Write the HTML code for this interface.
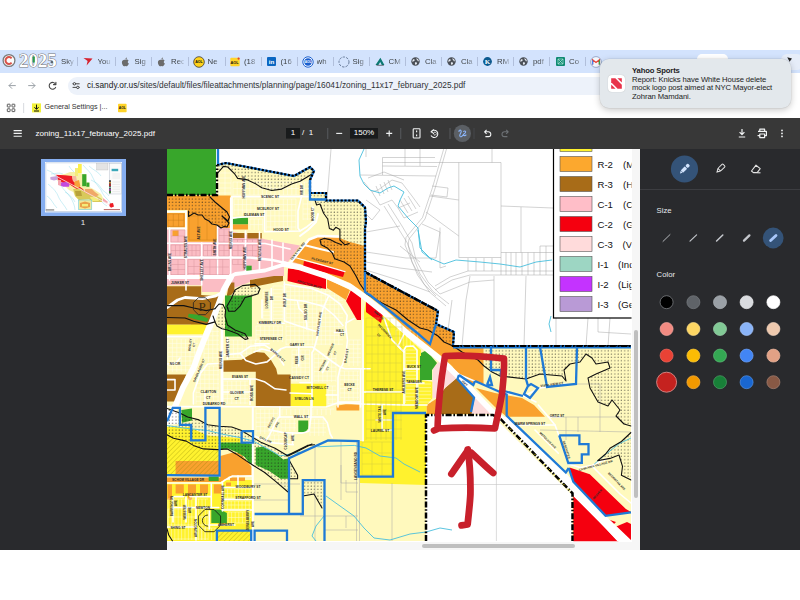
<!DOCTYPE html>
<html lang="en">
<head>
<meta charset="utf-8">
<title>zoning_11x17_february_2025.pdf</title>
<style>
html,body{margin:0;padding:0;background:#fff;}
body{width:800px;height:600px;position:relative;overflow:hidden;font-family:"Liberation Sans",sans-serif;}
.abs{position:absolute;}
#tabstrip{left:0;top:50px;width:800px;height:23px;background:#d3e3fd;}
#addr{left:0;top:73px;width:800px;height:25px;background:#fff;border-radius:6px 6px 0 0;}
#pill{left:68px;top:77px;width:700px;height:18px;background:#edf2fa;border-radius:9px;}
#bm{left:0;top:98px;width:800px;height:20px;background:#fff;}
#pdfbar{left:0;top:118px;width:800px;height:31px;background:#383838;}
#side{left:0;top:149px;width:167px;height:401px;background:#292a2d;}
#viewer{left:167px;top:149px;width:473px;height:401px;background:#fff;overflow:hidden;}
#panel{left:640px;top:149px;width:160px;height:401px;background:#292a2d;}
.tab{position:absolute;top:55px;height:13px;font-size:7.8px;line-height:13px;color:#3c4043;white-space:nowrap;overflow:hidden;-webkit-mask-image:linear-gradient(to right,#000 45%,rgba(0,0,0,0.15) 100%);mask-image:linear-gradient(to right,#000 45%,rgba(0,0,0,0.15) 100%);}
.sep{position:absolute;top:57px;width:1px;height:9px;background:#b1bfdb;}
.t{position:absolute;white-space:nowrap;}
</style>
</head>
<body>
<div class="abs" id="tabstrip"></div>
<div class="abs" id="addr"></div>
<div class="abs" id="pill"></div>
<div class="abs" id="bm"></div>
<div class="abs" id="pdfbar"></div>
<div class="abs" id="side"></div>
<div class="abs" id="viewer"></div>
<div class="abs" id="panel"></div>
<div class="sep" style="left:77px"></div>
<div class="sep" style="left:115px"></div>
<div class="sep" style="left:151px"></div>
<div class="sep" style="left:188px"></div>
<div class="sep" style="left:225px"></div>
<div class="sep" style="left:261px"></div>
<div class="sep" style="left:297px"></div>
<div class="sep" style="left:333px"></div>
<div class="sep" style="left:369px"></div>
<div class="sep" style="left:405px"></div>
<div class="sep" style="left:441px"></div>
<div class="sep" style="left:477px"></div>
<div class="sep" style="left:513px"></div>
<div class="sep" style="left:549px"></div>
<div class="sep" style="left:585px"></div>

<div class="tab" style="left:61px;width:13px">Sky</div>
<svg class="abs" style="left:83.1px;top:57px" width="10" height="9" viewBox="0 0 10 9"><path d="M0.5,1 L9.5,1.6 L3.6,8.6 L4.6,4 Z" fill="#d6232f"/></svg>
<div class="tab" style="left:97.5px;width:13px">You</div>
<svg class="abs" style="left:120.5px;top:56.5px" width="9" height="10" viewBox="0 0 9 10"><path d="M4.5,2.9 C5.4,2.3 6.8,2.3 7.6,3.4 C6.4,4.2 6.5,5.9 7.9,6.5 C7.4,7.9 6.5,9.2 5.7,9.2 C5.1,9.2 4.9,8.9 4.4,8.9 C3.9,8.9 3.6,9.2 3.1,9.2 C2.2,9.2 0.9,7.2 0.9,5.4 C0.9,3.4 2.6,2.4 4.5,2.9 Z M4.4,2.5 C4.3,1.5 5.1,0.6 6,0.5 C6.1,1.5 5.3,2.4 4.4,2.5 Z" fill="#6b6b6b"/></svg>
<div class="tab" style="left:134.5px;width:13px">Sig</div>
<svg class="abs" style="left:156.5px;top:56.5px" width="9" height="10" viewBox="0 0 9 10"><path d="M4.5,2.9 C5.4,2.3 6.8,2.3 7.6,3.4 C6.4,4.2 6.5,5.9 7.9,6.5 C7.4,7.9 6.5,9.2 5.7,9.2 C5.1,9.2 4.9,8.9 4.4,8.9 C3.9,8.9 3.6,9.2 3.1,9.2 C2.2,9.2 0.9,7.2 0.9,5.4 C0.9,3.4 2.6,2.4 4.5,2.9 Z M4.4,2.5 C4.3,1.5 5.1,0.6 6,0.5 C6.1,1.5 5.3,2.4 4.4,2.5 Z" fill="#6b6b6b"/></svg>
<div class="tab" style="left:171px;width:13px">Rec</div>
<svg class="abs" style="left:192.5px;top:55.5px" width="12" height="12" viewBox="0 0 12 12"><circle cx="6" cy="6" r="5.3" fill="#ffd21a" stroke="#3a3a3a" stroke-width="0.8"/><text x="6" y="7.4" font-size="3.6" font-weight="bold" text-anchor="middle" font-family="Liberation Sans, sans-serif" fill="#111">AOL</text></svg>
<div class="tab" style="left:207.5px;width:13px">Ne</div>
<svg class="abs" style="left:230px;top:56.5px" width="10" height="10" viewBox="0 0 10 10"><rect x="0.3" y="0.8" width="9.4" height="8.4" rx="1" fill="#ffd429"/><text x="4.6" y="6.6" font-size="3.8" font-weight="bold" text-anchor="middle" font-family="Liberation Sans, sans-serif" fill="#111">AOL</text><circle cx="8.6" cy="1.6" r="1.1" fill="#e0442e"/></svg>
<div class="tab" style="left:244px;width:13px">(18</div>
<svg class="abs" style="left:267px;top:57px" width="9" height="9" viewBox="0 0 9 9"><rect width="9" height="9" rx="1" fill="#0a66c2"/><text x="4.6" y="7.2" font-size="6.2" font-weight="bold" text-anchor="middle" font-family="Liberation Sans, sans-serif" fill="#fff">in</text></svg>
<div class="tab" style="left:280.5px;width:13px">(16</div>
<svg class="abs" style="left:301.5px;top:55.5px" width="12" height="12" viewBox="0 0 12 12"><circle cx="6" cy="6" r="5.2" fill="#fff" stroke="#1a5fd0" stroke-width="1"/><circle cx="6" cy="6" r="3.7" fill="#1a5fd0"/><text x="6" y="7.2" font-size="3.2" font-weight="bold" text-anchor="middle" font-family="Liberation Sans, sans-serif" fill="#fff">AOL</text></svg>
<div class="tab" style="left:316.5px;width:13px">wh</div>
<svg class="abs" style="left:337.5px;top:55.5px" width="12" height="12" viewBox="0 0 12 12"><circle cx="6" cy="6" r="5" fill="none" stroke="#5b6f8f" stroke-width="0.9" stroke-dasharray="2.4 1.2"/></svg>
<div class="tab" style="left:352.5px;width:13px">Sig</div>
<svg class="abs" style="left:374.5px;top:57px" width="10" height="9" viewBox="0 0 10 9"><path d="M0.5,8 L5.4,0.8 L9.4,8 L6.8,8 L5.2,5 L3.4,8 Z" fill="#0d7a74"/><path d="M1.5,8.3 L8.8,8.3" stroke="#222" stroke-width="0.6"/></svg>
<div class="tab" style="left:388.5px;width:13px">CM</div>
<svg class="abs" style="left:411px;top:57px" width="9" height="9" viewBox="0 0 9 9"><circle cx="4.5" cy="4.5" r="4.2" fill="#4a4f57"/><path d="M2,2.4 C3,2 4,2.6 3.6,3.6 C3.2,4.4 2.2,4.2 1.6,5 C1.2,4 1.4,3 2,2.4 Z M5.4,1.2 C6.8,1.6 7.8,2.8 7.9,4.2 C7,4.4 6.2,3.8 6.4,3 C5.6,2.8 5.2,2 5.4,1.2 Z M4,5.4 C5,5 6.2,5.6 6,6.6 C5.8,7.4 5,7.8 4.4,7.9 C4.4,7 3.6,6.4 4,5.4 Z" fill="#e8edf5"/></svg>
<div class="tab" style="left:425px;width:13px">Cla</div>
<svg class="abs" style="left:447px;top:57px" width="9" height="9" viewBox="0 0 9 9"><circle cx="4.5" cy="4.5" r="4.2" fill="#4a4f57"/><path d="M2,2.4 C3,2 4,2.6 3.6,3.6 C3.2,4.4 2.2,4.2 1.6,5 C1.2,4 1.4,3 2,2.4 Z M5.4,1.2 C6.8,1.6 7.8,2.8 7.9,4.2 C7,4.4 6.2,3.8 6.4,3 C5.6,2.8 5.2,2 5.4,1.2 Z M4,5.4 C5,5 6.2,5.6 6,6.6 C5.8,7.4 5,7.8 4.4,7.9 C4.4,7 3.6,6.4 4,5.4 Z" fill="#e8edf5"/></svg>
<div class="tab" style="left:461px;width:13px">Cla</div>
<svg class="abs" style="left:483px;top:57px" width="9" height="9" viewBox="0 0 9 9"><circle cx="4.5" cy="4.5" r="4.4" fill="#0b5a8f"/><text x="4.6" y="7" font-size="7" font-weight="bold" text-anchor="middle" font-family="Liberation Serif, serif" fill="#fff">K</text></svg>
<div class="tab" style="left:497px;width:13px">RM</div>
<svg class="abs" style="left:519px;top:57px" width="9" height="9" viewBox="0 0 9 9"><circle cx="4.5" cy="4.5" r="4.2" fill="#4a4f57"/><path d="M2,2.4 C3,2 4,2.6 3.6,3.6 C3.2,4.4 2.2,4.2 1.6,5 C1.2,4 1.4,3 2,2.4 Z M5.4,1.2 C6.8,1.6 7.8,2.8 7.9,4.2 C7,4.4 6.2,3.8 6.4,3 C5.6,2.8 5.2,2 5.4,1.2 Z M4,5.4 C5,5 6.2,5.6 6,6.6 C5.8,7.4 5,7.8 4.4,7.9 C4.4,7 3.6,6.4 4,5.4 Z" fill="#e8edf5"/></svg>
<div class="tab" style="left:533px;width:13px">pdf</div>
<svg class="abs" style="left:555.5px;top:57px" width="9" height="9" viewBox="0 0 9 9"><rect width="9" height="9" rx="1" fill="#0f8a72"/><path d="M2,2 L7,2 L7,7 L2,7 Z M2,2 L7,7 M7,2 L2,7" fill="none" stroke="#bfeee2" stroke-width="0.6"/></svg>
<div class="tab" style="left:569px;width:13px">Co</div>
<svg class="abs" style="left:590px;top:55.5px" width="12" height="12" viewBox="0 0 12 12"><circle cx="6" cy="6" r="5.4" fill="#f4f7fc" stroke="#7a8db5" stroke-width="0.7"/><path d="M2.6,8.6 L2.6,3.8 L6,6.4 L9.4,3.8 L9.4,8.6" fill="none" stroke="#ea4335" stroke-width="1.3"/><path d="M2.6,8.6 L2.6,4.4" stroke="#4285f4" stroke-width="1.3"/><path d="M9.4,8.6 L9.4,4.4" stroke="#34a853" stroke-width="1.3"/></svg>
<div class="abs" style="left:697px;top:54px;width:31px;height:19px;border-radius:5px 5px 0 0;background:#fff"></div>
<div class="abs" style="left:781px;top:54px;width:22px;height:16px;border-radius:6px;background:#e6edf9"></div>
<svg class="abs" style="left:0;top:50px" width="60" height="22" viewBox="0 50 60 22"><circle cx="9" cy="60.5" r="5.9" fill="#fbfbfb" stroke="#7a7a7a" stroke-width="1.3"/><path d="M11.6,58.4 A3.4,3.4 0 1 0 11.6,62.6" fill="none" stroke="#d9534a" stroke-width="2"/><text x="19" y="66.6" font-family="Liberation Serif, serif" font-size="18.6" font-weight="bold" fill="#fff" stroke="#777" stroke-width="1" paint-order="stroke" textLength="37.5" lengthAdjust="spacingAndGlyphs">2025</text><rect x="32.6" y="56.2" width="2.2" height="6.6" rx="1.1" fill="#2f9a4a"/><rect x="50.5" y="61" width="2.6" height="2.2" rx="1" fill="#59636e"/></svg>
<svg class="abs" style="left:0;top:73px" width="110" height="25" viewBox="0 73 110 25"><g fill="none" stroke="#9aa0a6" stroke-width="1" stroke-linecap="round" stroke-linejoin="round"><path d="M15.4,85.6 L9.2,85.6 M11.8,82.8 L9,85.6 L11.8,88.4"/><path d="M28.6,85.6 L34.8,85.6 M32.2,82.8 L35,85.6 L32.2,88.4"/></g><g fill="none" stroke="#474747" stroke-width="1.1" stroke-linecap="round"><path d="M55.6,84.2 A3.4,3.4 0 1 0 55.6,87.4"/><path d="M55.9,82.2 L55.9,84.6 L53.5,84.6" stroke-linejoin="round"/></g><g stroke="#333" stroke-width="0.9" fill="#edf2fa"><path d="M72.6,83.8 L79.6,83.8 M72.6,87.4 L79.6,87.4"/><circle cx="74.4" cy="83.8" r="1.2"/><circle cx="77.8" cy="87.4" r="1.2"/></g></svg>
<div class="t" id="url" style="left:87px;top:79.6px;font-size:8.34px;line-height:11px;color:#202124;">ci.sandy.or.us<span style="color:#303236">/sites/default/files/fileattachments/planning/page/16041/zoning_11x17_february_2025.pdf</span></div>
<svg class="abs" style="left:0;top:98px" width="140" height="20" viewBox="0 98 140 20"><g fill="none" stroke="#474747" stroke-width="0.9"><rect x="7.3" y="104.2" width="2.8" height="2.8" rx="0.4"/><rect x="12" y="104.2" width="2.8" height="2.8" rx="0.4"/><rect x="7.3" y="108.8" width="2.8" height="2.8" rx="0.4"/><rect x="12" y="108.8" width="2.8" height="2.8" rx="0.4"/></g><rect x="23.4" y="103" width="0.7" height="10" fill="#c7cbd1"/><rect x="32" y="103.4" width="9" height="9" fill="#f2f23a"/><path d="M36.5,104.6 L36.5,109 M34.4,107.2 L36.5,109.4 L38.6,107.2 M34,111 L39,111" fill="none" stroke="#111" stroke-width="1"/><rect x="118" y="103.8" width="8.6" height="8.4" rx="0.8" fill="#ffd429"/><text x="122.3" y="109.4" font-family="Liberation Sans, sans-serif" font-size="3.4" font-weight="bold" text-anchor="middle" fill="#111">AOL</text></svg>
<div class="t" style="left:44.4px;top:102.4px;font-size:7.15px;line-height:11px;color:#333;">General Settings |...</div>
<svg class="abs" style="left:0;top:118px" width="800" height="31" viewBox="0 118 800 31"><g stroke="#f1f3f4" stroke-width="1.1"><path d="M13.6,130.6 L21.8,130.6 M13.6,133.4 L21.8,133.4 M13.6,136.2 L21.8,136.2"/></g><rect x="286" y="128" width="14" height="10.6" fill="#191b1c"/><rect x="350" y="128" width="28" height="10.6" fill="#191b1c"/><rect x="327.4" y="128" width="0.8" height="11" fill="#5f6368"/><rect x="400.4" y="128" width="0.8" height="11" fill="#5f6368"/><rect x="449.6" y="128" width="0.8" height="11" fill="#5f6368"/><rect x="473.6" y="128" width="0.8" height="11" fill="#4a4d51"/><g stroke="#f1f3f4" stroke-width="1.1" fill="none"><path d="M336.2,133.4 L342.2,133.4"/><path d="M386.2,133.4 L392.2,133.4 M389.2,130.4 L389.2,136.4"/><rect x="413.2" y="128.8" width="6.8" height="9.2" rx="0.8"/><path d="M416.6,130.6 L416.6,132.2 M416.6,134.6 L416.6,136.2" stroke-width="1.2"/><path d="M431.4,131.6 A3.6,3.6 0 1 1 431,135.6"/><path d="M433.8,129.4 L431,131.8 L434,133.6" stroke-linejoin="round"/><path d="M433.2,133.6 L435,131.8 L436.8,133.6 L435,135.4 Z" stroke-width="0.8"/></g><circle cx="462.4" cy="133.4" r="8.6" fill="#5b5f64"/><path d="M459,131.4 C459,129.6 461.4,129.8 461.2,131.6 C461,133.6 458.8,135 460,136.4 C461,137.4 462.4,136 463,135 M463.6,131.4 C464.8,130.4 466.2,131.6 465.4,132.8 C464.6,134 463,133.6 463.6,135 C464,136 465.4,135.6 466,135" fill="none" stroke="#8ab4f8" stroke-width="1.1" stroke-linecap="round"/><g fill="none" stroke="#f1f3f4" stroke-width="1.1" stroke-linejoin="round"><path d="M486.6,129.8 L484.6,131.8 L486.6,133.8 M484.8,131.8 L488.4,131.8 A2.4,2.4 0 0 1 488.4,136.6 L485.4,136.6"/></g><g fill="none" stroke="#6d7175" stroke-width="1.1" stroke-linejoin="round"><path d="M506.2,129.8 L508.2,131.8 L506.2,133.8 M508,131.8 L504.4,131.8 A2.4,2.4 0 0 0 504.4,136.6 L507.4,136.6"/></g><g fill="none" stroke="#f1f3f4" stroke-width="1.2" stroke-linejoin="round"><path d="M742,129 L742,134.4 M739.6,132.2 L742,134.6 L744.4,132.2 M738.8,137 L745.2,137"/><path d="M759.8,131.2 L759.8,129.2 L764.6,129.2 L764.6,131.2 M758,131.4 L766.4,131.4 L766.4,135.6 L764.6,135.6 M759.8,135.6 L758,135.6 Z M759.8,134 L764.6,134 L764.6,137.6 L759.8,137.6 Z"/></g><g fill="#f1f3f4"><circle cx="782" cy="130.4" r="0.9"/><circle cx="782" cy="133.4" r="0.9"/><circle cx="782" cy="136.4" r="0.9"/></g></svg>
<div class="t" id="ttl" style="left:35.6px;top:128px;font-size:8.06px;line-height:11px;color:#fff;">zoning_11x17_february_2025.pdf</div>
<div class="t" style="left:286px;top:128px;width:14px;text-align:center;font-size:8px;line-height:10.6px;color:#fff;">1</div>
<div class="t" style="left:302px;top:128px;font-size:8px;line-height:10.6px;color:#fff;">/&nbsp; 1</div>
<div class="t" style="left:350px;top:128px;width:28px;text-align:center;font-size:8px;line-height:10.6px;color:#fff;">150%</div>
<div class="abs" style="left:41px;top:158.8px;width:84.6px;height:57px;background:#86aef0;"></div>
<svg class="abs" style="left:45px;top:162.2px" width="77.2" height="50.4" viewBox="0 0 77.2 50.4"><rect width="77.2" height="50.4" fill="#fff"/><rect x="0.9" y="0.9" width="75.4" height="48.6" fill="none" stroke="#9fb6d4" stroke-width="0.5"/><g fill="none" stroke="#6fd0e6" stroke-width="0.35"><path d="M2,8 C8,10 12,14 14,20 C16,26 22,30 26,36 C28,40 30,44 30,48 M3,22 C8,26 12,30 14,36 C16,40 20,44 22,48 M2,34 C6,36 8,42 12,46 M38,3 C42,8 46,10 48,16 C50,22 56,26 58,32 C60,36 64,38 66,42 M44,4 C48,8 54,10 56,14 M46,18 C50,20 54,22 56,26 C58,30 62,30 64,34 M20,30 C24,32 28,36 30,40 M6,12 C10,12 14,10 18,12 M52,36 C56,38 58,42 62,44 M24,4 C26,8 30,10 32,14"/></g><path d="M25,10 L30,10 L30,6 L33,6 L33,2 L36.6,2 L36.6,12 L41.4,12.2 L41.4,20.6 L44.4,20.6 L44.4,25 L50,28 L56,32 L58,36 L57,40 L50,40 L46,38 L33.6,38 L30,34 L28.2,30 L24,28 L20,24 L16,24 L14,20 L10,16 L14,13 L20,12 Z" fill="#f7f0a8"/><rect x="33" y="2" width="3.6" height="9" fill="#fff04a"/><rect x="30" y="6" width="3" height="8" fill="#f3ec7a"/><path d="M5.4,15 L12.6,14 L13,17.6 L9,18.6 L5.4,17.4 Z" fill="#c9a3dc"/><path d="M10.2,12.8 L20,13.2 L27,14 L28,19 L33,23.4 L38,27 L40,30 L38,31 L30,26 L24,22 L18,21 L13,17.6 L12.4,14 Z" fill="#ee1c25"/><path d="M15,20.6 L22,20 L24.6,22.6 L24,24.8 L18,24.8 L14.6,23 Z" fill="#c24be0"/><path d="M13,18 L16,18 L16,24 L13,23 Z" fill="#f4a6b0"/><rect x="37.2" y="12.2" width="4.2" height="12" fill="#38a62b"/><rect x="41.4" y="20.6" width="3" height="4.2" fill="#38a62b"/><path d="M29.4,19.4 L34,18 L35.4,24 L33,26.6 L29.4,25 Z" fill="#f7a23a"/><path d="M27,14 L31,14 L32,19 L28,19 Z" fill="#f5b8a0"/><path d="M28.2,27 L36,26.6 L40,30 L48,30 L52,34 L57,37 L57,40 L48,40 L44,37 L34,38 L30,34 Z" fill="#d8c95a"/><path d="M40,27 L47,27 L50,30 L54,33 L50,35 L44,33 L40,31 Z" fill="#f0a868"/><path d="M30,29 L36,29 L37,34 L31,34 Z" fill="#b8a23a"/><path d="M45,35 L52,35 L54,39 L47,39 Z" fill="#f3ec7a"/><path d="M12,14.6 L67.8,44.7" stroke="#fbe3e6" stroke-width="0.8"/><rect x="33.6" y="38" width="13.2" height="9.6" fill="#f2e79a" stroke="#56c6dc" stroke-width="0.5"/><path d="M35,41 L40,39.6 L45,41 L45,45 L40,46.4 L35,45 Z" fill="#e9a24a"/><path d="M37,42 L43,42 L43,44.4 L37,44.4 Z" fill="#f3ec7a"/><path d="M64.8,41.4 L68,41 L69,44.6 L66,45.8 L64.4,44 Z" fill="#ee1c25"/><path d="M58,36 L63,40 L62,41 L58,39 Z" fill="#f4a6b0"/><rect x="51.6" y="1.4" width="11.4" height="6.6" fill="#e4e4e4" stroke="#b0b0b0" stroke-width="0.3"/><rect x="64.2" y="1.4" width="12" height="30.6" fill="#fbfbfb" stroke="#a9b4c4" stroke-width="0.4"/><rect x="66.6" y="6.8" width="6.6" height="2.4" fill="#3aa7b8"/><rect x="64" y="18.2" width="2" height="13.2" fill="#4a4a4a"/><rect x="64.2" y="20" width="1.6" height="1.4" fill="#f7a23a"/><rect x="64.2" y="22.4" width="1.6" height="1.4" fill="#ee1c25"/><rect x="64.2" y="24.8" width="1.6" height="1.4" fill="#9dd6c3"/><rect x="64.2" y="27.2" width="1.6" height="1.4" fill="#c24be0"/><rect x="64.2" y="29.4" width="1.6" height="1.4" fill="#38a62b"/><g stroke="#c8c8c8" stroke-width="0.3"><path d="M67.4,12 L75,12 M67.4,14 L75,14 M67.4,16 L75,16 M67.4,20 L75,20 M67.4,22.4 L75,22.4 M67.4,24.8 L75,24.8 M67.4,27.2 L75,27.2 M67.4,29.6 L75,29.6"/></g><rect x="0.8" y="47.5" width="8.4" height="0.9" fill="#555"/><rect x="58.8" y="47.2" width="16.2" height="0.9" fill="#b05050"/></svg>
<div class="t" style="left:63px;top:217.4px;width:40px;text-align:center;font-size:8px;line-height:11px;color:#e8eaed;">1</div>
<div class="abs" style="left:631.5px;top:149px;width:8.5px;height:401px;background:#f6f6f6;"></div>
<div class="abs" style="left:167px;top:541.5px;width:465px;height:8.5px;background:#f6f6f6;"></div>
<div class="abs" style="left:633.6px;top:330px;width:4.2px;height:168px;border-radius:2.1px;background:#bfbfbf;"></div>
<div class="abs" style="left:422px;top:543.8px;width:153px;height:4.2px;border-radius:2.1px;background:#bfbfbf;"></div>
<svg class="abs" style="left:0;top:0" width="800" height="600" viewBox="0 0 800 600"><defs>
<clipPath id="mapclip"><rect x="167" y="149" width="464.5" height="392.5"/></clipPath>
<pattern id="dots" width="3.3" height="3.3" patternUnits="userSpaceOnUse"><circle cx="1" cy="1" r="0.5" fill="#1a1a1a"/></pattern>
<pattern id="hatch" width="3.4" height="3.4" patternUnits="userSpaceOnUse" patternTransform="rotate(-45)"><line x1="0" y1="0" x2="3.4" y2="0" stroke="#858000" stroke-width="0.5"/></pattern>
</defs><g clip-path="url(#mapclip)"><rect x="167" y="149" width="465" height="393" fill="#fff"/>
<polygon points="167,195 217,195 217,165 226,163 294,176 310,167 314,171 310,180 310,193 326,193 326,200.5 358,200.5 365,207.5 366,222 365,228 365,272 438,311 436,324 454,332 453,346 631,346 631,541 572,541 572,495 492,415 426,415 426,541 167,541" fill="#fff9bd" />
<g stroke="#ffffff" stroke-width="0.5" opacity="0.8">
<line x1="234" y1="199" x2="234" y2="215"/>
<line x1="238.2" y1="199" x2="238.2" y2="215"/>
<line x1="242.4" y1="199" x2="242.4" y2="215"/>
<line x1="246.6" y1="199" x2="246.6" y2="215"/>
<line x1="250.8" y1="199" x2="250.8" y2="215"/>
<line x1="255" y1="199" x2="255" y2="215"/>
<line x1="259.2" y1="199" x2="259.2" y2="215"/>
<line x1="234" y1="199" x2="263" y2="199"/>
<line x1="234" y1="204.5" x2="263" y2="204.5"/>
<line x1="234" y1="210" x2="263" y2="210"/>
</g>
<g stroke="#ffffff" stroke-width="0.5" opacity="0.8">
<line x1="266.5" y1="199" x2="266.5" y2="230"/>
<line x1="270.7" y1="199" x2="270.7" y2="230"/>
<line x1="274.9" y1="199" x2="274.9" y2="230"/>
<line x1="279.1" y1="199" x2="279.1" y2="230"/>
<line x1="283.3" y1="199" x2="283.3" y2="230"/>
<line x1="287.5" y1="199" x2="287.5" y2="230"/>
<line x1="291.7" y1="199" x2="291.7" y2="230"/>
<line x1="295.9" y1="199" x2="295.9" y2="230"/>
<line x1="266.5" y1="199" x2="296" y2="199"/>
<line x1="266.5" y1="204.6" x2="296" y2="204.6"/>
<line x1="266.5" y1="210.2" x2="296" y2="210.2"/>
<line x1="266.5" y1="215.8" x2="296" y2="215.8"/>
<line x1="266.5" y1="221.4" x2="296" y2="221.4"/>
<line x1="266.5" y1="227" x2="296" y2="227"/>
</g>
<g stroke="#ffffff" stroke-width="0.5" opacity="0.8">
<line x1="250" y1="219" x2="250" y2="230"/>
<line x1="254.2" y1="219" x2="254.2" y2="230"/>
<line x1="258.4" y1="219" x2="258.4" y2="230"/>
<line x1="262.6" y1="219" x2="262.6" y2="230"/>
<line x1="250" y1="219" x2="263" y2="219"/>
<line x1="250" y1="224.6" x2="263" y2="224.6"/>
</g>
<g stroke="#ffffff" stroke-width="0.5" opacity="0.8">
<line x1="219" y1="168" x2="219" y2="195"/>
<line x1="225" y1="168" x2="225" y2="195"/>
<line x1="231" y1="168" x2="231" y2="195"/>
<line x1="219" y1="168" x2="231" y2="168"/>
<line x1="219" y1="173" x2="231" y2="173"/>
<line x1="219" y1="178" x2="231" y2="178"/>
<line x1="219" y1="183" x2="231" y2="183"/>
<line x1="219" y1="188" x2="231" y2="188"/>
<line x1="219" y1="193" x2="231" y2="193"/>
</g>
<g stroke="#ffffff" stroke-width="0.5" opacity="0.8">
<line x1="233" y1="182" x2="233" y2="195"/>
<line x1="237.2" y1="182" x2="237.2" y2="195"/>
<line x1="241.4" y1="182" x2="241.4" y2="195"/>
<line x1="245.6" y1="182" x2="245.6" y2="195"/>
<line x1="249.8" y1="182" x2="249.8" y2="195"/>
<line x1="254" y1="182" x2="254" y2="195"/>
<line x1="258.2" y1="182" x2="258.2" y2="195"/>
<line x1="262.4" y1="182" x2="262.4" y2="195"/>
<line x1="266.6" y1="182" x2="266.6" y2="195"/>
<line x1="270.8" y1="182" x2="270.8" y2="195"/>
<line x1="275" y1="182" x2="275" y2="195"/>
<line x1="279.2" y1="182" x2="279.2" y2="195"/>
<line x1="283.4" y1="182" x2="283.4" y2="195"/>
<line x1="287.6" y1="182" x2="287.6" y2="195"/>
<line x1="291.8" y1="182" x2="291.8" y2="195"/>
<line x1="296" y1="182" x2="296" y2="195"/>
<line x1="300.2" y1="182" x2="300.2" y2="195"/>
<line x1="304.4" y1="182" x2="304.4" y2="195"/>
<line x1="308.6" y1="182" x2="308.6" y2="195"/>
<line x1="233" y1="182" x2="310" y2="182"/>
<line x1="233" y1="188.5" x2="310" y2="188.5"/>
<line x1="233" y1="195" x2="310" y2="195"/>
</g>
<g stroke="#ffffff" stroke-width="0.5" opacity="0.8">
<line x1="303" y1="199" x2="303" y2="220"/>
<line x1="307.5" y1="199" x2="307.5" y2="220"/>
<line x1="312" y1="199" x2="312" y2="220"/>
<line x1="303" y1="199" x2="312" y2="199"/>
<line x1="303" y1="204" x2="312" y2="204"/>
<line x1="303" y1="209" x2="312" y2="209"/>
<line x1="303" y1="214" x2="312" y2="214"/>
<line x1="303" y1="219" x2="312" y2="219"/>
</g>
<g stroke="#ffffff" stroke-width="0.5" opacity="0.8">
<line x1="273" y1="286" x2="273" y2="320"/>
<line x1="283" y1="286" x2="283" y2="320"/>
<line x1="273" y1="286" x2="283" y2="286"/>
<line x1="273" y1="289.6" x2="283" y2="289.6"/>
<line x1="273" y1="293.2" x2="283" y2="293.2"/>
<line x1="273" y1="296.8" x2="283" y2="296.8"/>
<line x1="273" y1="300.4" x2="283" y2="300.4"/>
<line x1="273" y1="304" x2="283" y2="304"/>
<line x1="273" y1="307.6" x2="283" y2="307.6"/>
<line x1="273" y1="311.2" x2="283" y2="311.2"/>
<line x1="273" y1="314.8" x2="283" y2="314.8"/>
<line x1="273" y1="318.4" x2="283" y2="318.4"/>
</g>
<g stroke="#ffffff" stroke-width="0.5" opacity="0.8">
<line x1="263" y1="290" x2="263" y2="320"/>
<line x1="270" y1="290" x2="270" y2="320"/>
<line x1="263" y1="290" x2="270" y2="290"/>
<line x1="263" y1="293.6" x2="270" y2="293.6"/>
<line x1="263" y1="297.2" x2="270" y2="297.2"/>
<line x1="263" y1="300.8" x2="270" y2="300.8"/>
<line x1="263" y1="304.4" x2="270" y2="304.4"/>
<line x1="263" y1="308" x2="270" y2="308"/>
<line x1="263" y1="311.6" x2="270" y2="311.6"/>
<line x1="263" y1="315.2" x2="270" y2="315.2"/>
<line x1="263" y1="318.8" x2="270" y2="318.8"/>
</g>
<g stroke="#ffffff" stroke-width="0.5" opacity="0.8">
<line x1="286" y1="287" x2="286" y2="345"/>
<line x1="290.4" y1="287" x2="290.4" y2="345"/>
<line x1="294.8" y1="287" x2="294.8" y2="345"/>
<line x1="299.2" y1="287" x2="299.2" y2="345"/>
<line x1="303.6" y1="287" x2="303.6" y2="345"/>
<line x1="308" y1="287" x2="308" y2="345"/>
<line x1="312.4" y1="287" x2="312.4" y2="345"/>
<line x1="316.8" y1="287" x2="316.8" y2="345"/>
<line x1="321.2" y1="287" x2="321.2" y2="345"/>
<line x1="325.6" y1="287" x2="325.6" y2="345"/>
<line x1="330" y1="287" x2="330" y2="345"/>
<line x1="334.4" y1="287" x2="334.4" y2="345"/>
<line x1="338.8" y1="287" x2="338.8" y2="345"/>
<line x1="286" y1="287" x2="343" y2="287"/>
<line x1="286" y1="291.4" x2="343" y2="291.4"/>
<line x1="286" y1="295.8" x2="343" y2="295.8"/>
<line x1="286" y1="300.2" x2="343" y2="300.2"/>
<line x1="286" y1="304.6" x2="343" y2="304.6"/>
<line x1="286" y1="309" x2="343" y2="309"/>
<line x1="286" y1="313.4" x2="343" y2="313.4"/>
<line x1="286" y1="317.8" x2="343" y2="317.8"/>
<line x1="286" y1="322.2" x2="343" y2="322.2"/>
<line x1="286" y1="326.6" x2="343" y2="326.6"/>
<line x1="286" y1="331" x2="343" y2="331"/>
<line x1="286" y1="335.4" x2="343" y2="335.4"/>
<line x1="286" y1="339.8" x2="343" y2="339.8"/>
<line x1="286" y1="344.2" x2="343" y2="344.2"/>
</g>
<g stroke="#ffffff" stroke-width="0.5" opacity="0.8">
<line x1="256" y1="326" x2="256" y2="342"/>
<line x1="260.4" y1="326" x2="260.4" y2="342"/>
<line x1="264.8" y1="326" x2="264.8" y2="342"/>
<line x1="269.2" y1="326" x2="269.2" y2="342"/>
<line x1="273.6" y1="326" x2="273.6" y2="342"/>
<line x1="278" y1="326" x2="278" y2="342"/>
<line x1="282.4" y1="326" x2="282.4" y2="342"/>
<line x1="256" y1="326" x2="283" y2="326"/>
<line x1="256" y1="330.4" x2="283" y2="330.4"/>
<line x1="256" y1="334.8" x2="283" y2="334.8"/>
<line x1="256" y1="339.2" x2="283" y2="339.2"/>
</g>
<g stroke="#ffffff" stroke-width="0.5" opacity="0.8">
<line x1="168" y1="339" x2="168" y2="372"/>
<line x1="172.4" y1="339" x2="172.4" y2="372"/>
<line x1="176.8" y1="339" x2="176.8" y2="372"/>
<line x1="181.2" y1="339" x2="181.2" y2="372"/>
<line x1="185.6" y1="339" x2="185.6" y2="372"/>
<line x1="190" y1="339" x2="190" y2="372"/>
<line x1="194.4" y1="339" x2="194.4" y2="372"/>
<line x1="168" y1="339" x2="198" y2="339"/>
<line x1="168" y1="343.4" x2="198" y2="343.4"/>
<line x1="168" y1="347.8" x2="198" y2="347.8"/>
<line x1="168" y1="352.2" x2="198" y2="352.2"/>
<line x1="168" y1="356.6" x2="198" y2="356.6"/>
<line x1="168" y1="361" x2="198" y2="361"/>
<line x1="168" y1="365.4" x2="198" y2="365.4"/>
<line x1="168" y1="369.8" x2="198" y2="369.8"/>
</g>
<g stroke="#ffffff" stroke-width="0.5" opacity="0.8">
<line x1="196" y1="366" x2="196" y2="404"/>
<line x1="200.4" y1="366" x2="200.4" y2="404"/>
<line x1="204.8" y1="366" x2="204.8" y2="404"/>
<line x1="209.2" y1="366" x2="209.2" y2="404"/>
<line x1="213.6" y1="366" x2="213.6" y2="404"/>
<line x1="218" y1="366" x2="218" y2="404"/>
<line x1="196" y1="366" x2="219" y2="366"/>
<line x1="196" y1="370.4" x2="219" y2="370.4"/>
<line x1="196" y1="374.8" x2="219" y2="374.8"/>
<line x1="196" y1="379.2" x2="219" y2="379.2"/>
<line x1="196" y1="383.6" x2="219" y2="383.6"/>
<line x1="196" y1="388" x2="219" y2="388"/>
<line x1="196" y1="392.4" x2="219" y2="392.4"/>
<line x1="196" y1="396.8" x2="219" y2="396.8"/>
<line x1="196" y1="401.2" x2="219" y2="401.2"/>
</g>
<g stroke="#ffffff" stroke-width="0.5" opacity="0.8">
<line x1="223" y1="381" x2="223" y2="404"/>
<line x1="227.4" y1="381" x2="227.4" y2="404"/>
<line x1="231.8" y1="381" x2="231.8" y2="404"/>
<line x1="236.2" y1="381" x2="236.2" y2="404"/>
<line x1="240.6" y1="381" x2="240.6" y2="404"/>
<line x1="245" y1="381" x2="245" y2="404"/>
<line x1="223" y1="381" x2="248" y2="381"/>
<line x1="223" y1="385.4" x2="248" y2="385.4"/>
<line x1="223" y1="389.8" x2="248" y2="389.8"/>
<line x1="223" y1="394.2" x2="248" y2="394.2"/>
<line x1="223" y1="398.6" x2="248" y2="398.6"/>
<line x1="223" y1="403" x2="248" y2="403"/>
</g>
<g stroke="#ffffff" stroke-width="0.5" opacity="0.8">
<line x1="204" y1="327" x2="204" y2="362"/>
<line x1="208.4" y1="327" x2="208.4" y2="362"/>
<line x1="212.8" y1="327" x2="212.8" y2="362"/>
<line x1="217.2" y1="327" x2="217.2" y2="362"/>
<line x1="204" y1="327" x2="219" y2="327"/>
<line x1="204" y1="331.4" x2="219" y2="331.4"/>
<line x1="204" y1="335.8" x2="219" y2="335.8"/>
<line x1="204" y1="340.2" x2="219" y2="340.2"/>
<line x1="204" y1="344.6" x2="219" y2="344.6"/>
<line x1="204" y1="349" x2="219" y2="349"/>
<line x1="204" y1="353.4" x2="219" y2="353.4"/>
<line x1="204" y1="357.8" x2="219" y2="357.8"/>
</g>
<g stroke="#ffffff" stroke-width="0.5" opacity="0.8">
<line x1="229" y1="340" x2="229" y2="358"/>
<line x1="233.4" y1="340" x2="233.4" y2="358"/>
<line x1="237.8" y1="340" x2="237.8" y2="358"/>
<line x1="242.2" y1="340" x2="242.2" y2="358"/>
<line x1="246.6" y1="340" x2="246.6" y2="358"/>
<line x1="251" y1="340" x2="251" y2="358"/>
<line x1="255.4" y1="340" x2="255.4" y2="358"/>
<line x1="259.8" y1="340" x2="259.8" y2="358"/>
<line x1="229" y1="340" x2="262" y2="340"/>
<line x1="229" y1="344.4" x2="262" y2="344.4"/>
<line x1="229" y1="348.8" x2="262" y2="348.8"/>
<line x1="229" y1="353.2" x2="262" y2="353.2"/>
<line x1="229" y1="357.6" x2="262" y2="357.6"/>
</g>
<g stroke="#ffffff" stroke-width="0.5" opacity="0.8">
<line x1="292" y1="350" x2="292" y2="381"/>
<line x1="296.4" y1="350" x2="296.4" y2="381"/>
<line x1="300.8" y1="350" x2="300.8" y2="381"/>
<line x1="305.2" y1="350" x2="305.2" y2="381"/>
<line x1="309.6" y1="350" x2="309.6" y2="381"/>
<line x1="292" y1="350" x2="310" y2="350"/>
<line x1="292" y1="354.4" x2="310" y2="354.4"/>
<line x1="292" y1="358.8" x2="310" y2="358.8"/>
<line x1="292" y1="363.2" x2="310" y2="363.2"/>
<line x1="292" y1="367.6" x2="310" y2="367.6"/>
<line x1="292" y1="372" x2="310" y2="372"/>
<line x1="292" y1="376.4" x2="310" y2="376.4"/>
<line x1="292" y1="380.8" x2="310" y2="380.8"/>
</g>
<g stroke="#ffffff" stroke-width="0.5" opacity="0.8">
<line x1="314" y1="354" x2="314" y2="382"/>
<line x1="318.4" y1="354" x2="318.4" y2="382"/>
<line x1="322.8" y1="354" x2="322.8" y2="382"/>
<line x1="327.2" y1="354" x2="327.2" y2="382"/>
<line x1="331.6" y1="354" x2="331.6" y2="382"/>
<line x1="336" y1="354" x2="336" y2="382"/>
<line x1="314" y1="354" x2="336" y2="354"/>
<line x1="314" y1="358.4" x2="336" y2="358.4"/>
<line x1="314" y1="362.8" x2="336" y2="362.8"/>
<line x1="314" y1="367.2" x2="336" y2="367.2"/>
<line x1="314" y1="371.6" x2="336" y2="371.6"/>
<line x1="314" y1="376" x2="336" y2="376"/>
<line x1="314" y1="380.4" x2="336" y2="380.4"/>
</g>
<g stroke="#ffffff" stroke-width="0.5" opacity="0.8">
<line x1="340" y1="371" x2="340" y2="400"/>
<line x1="344.4" y1="371" x2="344.4" y2="400"/>
<line x1="348.8" y1="371" x2="348.8" y2="400"/>
<line x1="353.2" y1="371" x2="353.2" y2="400"/>
<line x1="357.6" y1="371" x2="357.6" y2="400"/>
<line x1="340" y1="371" x2="359" y2="371"/>
<line x1="340" y1="375.4" x2="359" y2="375.4"/>
<line x1="340" y1="379.8" x2="359" y2="379.8"/>
<line x1="340" y1="384.2" x2="359" y2="384.2"/>
<line x1="340" y1="388.6" x2="359" y2="388.6"/>
<line x1="340" y1="393" x2="359" y2="393"/>
<line x1="340" y1="397.4" x2="359" y2="397.4"/>
</g>
<g stroke="#ffffff" stroke-width="0.5" opacity="0.8">
<line x1="349" y1="340" x2="349" y2="366"/>
<line x1="353.4" y1="340" x2="353.4" y2="366"/>
<line x1="357.8" y1="340" x2="357.8" y2="366"/>
<line x1="349" y1="340" x2="361" y2="340"/>
<line x1="349" y1="344.4" x2="361" y2="344.4"/>
<line x1="349" y1="348.8" x2="361" y2="348.8"/>
<line x1="349" y1="353.2" x2="361" y2="353.2"/>
<line x1="349" y1="357.6" x2="361" y2="357.6"/>
<line x1="349" y1="362" x2="361" y2="362"/>
</g>
<g stroke="#ffffff" stroke-width="0.5" opacity="0.8">
<line x1="328" y1="386" x2="328" y2="404"/>
<line x1="332.4" y1="386" x2="332.4" y2="404"/>
<line x1="328" y1="386" x2="336" y2="386"/>
<line x1="328" y1="390.4" x2="336" y2="390.4"/>
<line x1="328" y1="394.8" x2="336" y2="394.8"/>
<line x1="328" y1="399.2" x2="336" y2="399.2"/>
<line x1="328" y1="403.6" x2="336" y2="403.6"/>
</g>
<g stroke="#ffffff" stroke-width="0.5" opacity="0.8">
<line x1="256" y1="409" x2="256" y2="434"/>
<line x1="260.4" y1="409" x2="260.4" y2="434"/>
<line x1="264.8" y1="409" x2="264.8" y2="434"/>
<line x1="269.2" y1="409" x2="269.2" y2="434"/>
<line x1="273.6" y1="409" x2="273.6" y2="434"/>
<line x1="278" y1="409" x2="278" y2="434"/>
<line x1="256" y1="409" x2="278" y2="409"/>
<line x1="256" y1="413.4" x2="278" y2="413.4"/>
<line x1="256" y1="417.8" x2="278" y2="417.8"/>
<line x1="256" y1="422.2" x2="278" y2="422.2"/>
<line x1="256" y1="426.6" x2="278" y2="426.6"/>
<line x1="256" y1="431" x2="278" y2="431"/>
</g>
<g stroke="#ffffff" stroke-width="0.5" opacity="0.8">
<line x1="282" y1="409" x2="282" y2="415"/>
<line x1="286.4" y1="409" x2="286.4" y2="415"/>
<line x1="290.8" y1="409" x2="290.8" y2="415"/>
<line x1="295.2" y1="409" x2="295.2" y2="415"/>
<line x1="299.6" y1="409" x2="299.6" y2="415"/>
<line x1="304" y1="409" x2="304" y2="415"/>
<line x1="308.4" y1="409" x2="308.4" y2="415"/>
<line x1="312.8" y1="409" x2="312.8" y2="415"/>
<line x1="317.2" y1="409" x2="317.2" y2="415"/>
<line x1="321.6" y1="409" x2="321.6" y2="415"/>
<line x1="326" y1="409" x2="326" y2="415"/>
<line x1="330.4" y1="409" x2="330.4" y2="415"/>
<line x1="282" y1="409" x2="334" y2="409"/>
</g>
<g stroke="#ffffff" stroke-width="0.5" opacity="0.8">
<line x1="281" y1="419" x2="281" y2="431"/>
<line x1="285.4" y1="419" x2="285.4" y2="431"/>
<line x1="289.8" y1="419" x2="289.8" y2="431"/>
<line x1="294.2" y1="419" x2="294.2" y2="431"/>
<line x1="281" y1="419" x2="296" y2="419"/>
<line x1="281" y1="423.4" x2="296" y2="423.4"/>
<line x1="281" y1="427.8" x2="296" y2="427.8"/>
</g>
<g stroke="#ffffff" stroke-width="0.5" opacity="0.8">
<line x1="310" y1="419" x2="310" y2="436"/>
<line x1="314.4" y1="419" x2="314.4" y2="436"/>
<line x1="318.8" y1="419" x2="318.8" y2="436"/>
<line x1="323.2" y1="419" x2="323.2" y2="436"/>
<line x1="310" y1="419" x2="326" y2="419"/>
<line x1="310" y1="423.4" x2="326" y2="423.4"/>
<line x1="310" y1="427.8" x2="326" y2="427.8"/>
<line x1="310" y1="432.2" x2="326" y2="432.2"/>
</g>
<g stroke="#ffffff" stroke-width="0.5" opacity="0.8">
<line x1="270" y1="435" x2="270" y2="443"/>
<line x1="274.4" y1="435" x2="274.4" y2="443"/>
<line x1="278.8" y1="435" x2="278.8" y2="443"/>
<line x1="283.2" y1="435" x2="283.2" y2="443"/>
<line x1="287.6" y1="435" x2="287.6" y2="443"/>
<line x1="270" y1="435" x2="291" y2="435"/>
<line x1="270" y1="439.4" x2="291" y2="439.4"/>
</g>
<polygon points="167,149 216,149 216,195 167,195" fill="#38a62b" />
<polygon points="364,312 366,300 384,314 404,334 421,350 421,356 420,380 432.5,381.7 432.5,398 426.7,405 426.7,415 426,415 426,485 360,483 360,441 364,441" fill="#fff22e" />
<polygon points="290.6,383.75 326.25,383.75 326.25,407.5 290.6,407.5" fill="#fff22e" />
<polygon points="167,324.6 191,324.6 191,320 197,321 207,324 203,334.2 167,334.2" fill="#fff22e" />
<polygon points="167,480 253,480 253,541 167,541" fill="#fff22e" />
<polygon points="167,434.8 173.5,438.3 186.3,441.1 193.4,445.4 203.3,448.9 219,449.6 219,475.5 167,475.5" fill="#fff22e" />
<polygon points="167,427 189,427 207.6,435.5 240.2,438.3 240.2,442.6 218.9,442.6 218.9,449.6 203.3,448.9 193.4,445.4 186.3,441.1 173.5,438.3 167,434.8" fill="#fff22e" />
<polygon points="167,409 178,412.5 178,424 167,425" fill="#ffffff" />
<polygon points="167,229.5 187.5,229.5 187.5,241.7 217.5,241.7 217.5,224 221,228 227,227 230,224 230,231 266,239.4 300,245.6 288,262 284,266 284,276 252,279 250,282 234,288 222,292 202,292 202,285.2 167,285.2" fill="#fbbdc4" />
<polygon points="294,258.5 305,261 304.5,265 293,263" fill="#fbbdc4" />
<polygon points="167,195.5 230.5,195.5 230.5,228 222,228 217.5,226 217.5,241.7 187.5,241.7 187.5,210 167,210" fill="#f9a12e" />
<polygon points="167,213 185,213 185,227.4 167,227.4" fill="#f9a12e" />
<polygon points="172.5,230.5 178.5,230.5 178.5,236 172.5,236" fill="#f9a12e" />
<polygon points="293,262 310,239 318,236.5 338,237.5 350,242 365,246 365,272 438,311 436,324 454,332 453,346 483.5,346 483.5,384 475,381 473.3,385 459,375 452,366 440,355 408,330 384,308 366,294 350,283 326,273 300,264" fill="#f9a12e" />
<polygon points="327,279 350,290 346,300 327,288" fill="#f9a12e" />
<polygon points="476,388 495,393 508,395.5 522,398 534,405 545,416.7 506.7,416.7 496,408" fill="#f9a12e" />
<polygon points="426.7,414 426.7,405 437.5,398 437.5,414" fill="#f9a12e" />
<polygon points="336.5,405.7 345.8,404.3 359.3,404.5 359.3,410.6 336.5,410.6" fill="#f9a12e" />
<polygon points="220.3,456 233,452.5 240.2,453.2 251.5,466.7 251.5,475.2 228.8,476.6 224.6,481 220.3,481" fill="#f9a12e" />
<polygon points="175.6,461 219,461 219,475 175.6,475" fill="#f9a12e" />
<polygon points="167,477.5 221,477.5 221,482 167,482" fill="#f9a12e" />
<polygon points="167.5,484.4 172,484.4 172,500 167.5,500" fill="#f9a12e" />
<polygon points="175.6,484.4 183.8,484.4 183.8,493.5 175.6,493.5" fill="#f9a12e" />
<polygon points="188,484.4 196,484.4 196,493.5 188,493.5" fill="#f9a12e" />
<polygon points="200,484.4 208,484.4 208,493.5 200,493.5" fill="#f9a12e" />
<polygon points="213.8,484.4 221,484.4 221,493.5 213.8,493.5" fill="#f9a12e" />
<polygon points="188,493 192,493 192,500 188,500" fill="#f9a12e" />
<polygon points="230,477.5 245,477.5 245,481 230,481" fill="#f9a12e" />
<polygon points="226,482.5 231,482.5 231,486 226,486" fill="#f9a12e" />
<polygon points="232.7,224.2 248,224.2 248,229.5 232.7,229.5" fill="#f9a12e" />
<polygon points="167,286.2 201.2,286.2 201.2,295 215,296 222,292 218,303 212,318 208,324.4 167,324.4" fill="#a86c18" />
<polygon points="229.4,282.5 234.4,282.5 234.4,291.2 231.2,295 226.5,297" fill="#a86c18" />
<polygon points="250,280 274,276 283,276 283,281 275,282.5 250,287.5" fill="#a86c18" />
<polygon points="223.2,360.5 241.6,359.8 248.7,355.5 255.8,352 264.3,352.7 271,360 276.2,368.7 277.5,374.4 290.6,374.4 290.6,406.9 255.8,406.9 255.8,371.8 223.2,371.8" fill="#a86c18" />
<polygon points="167,374.6 186.3,374.6 181,388 175,401.6 167,401.6" fill="#a86c18" />
<polygon points="445,388 456.7,378 475,396.7 471.7,414 437.5,414 437.5,398" fill="#a86c18" />
<polygon points="232.7,233 244.6,233 244.6,238 232.7,238" fill="#a86c18" />
<polygon points="247.3,233 261.8,233 261.8,238.4 247.3,238.4" fill="#a86c18" />
<polygon points="433,368 441,360 456.7,378 445,388 437.5,398 432.5,398 432.5,380" fill="#fddcdc" />
<polygon points="475,396.7 491.7,414 471.7,414" fill="#fddcdc" />
<polygon points="304,261 345,271 343,277 303,267" fill="#f5000f" />
<polygon points="288,268.5 302,270 326,278.5 326,289 300,284 287.5,281" fill="#f5000f" />
<polygon points="351,290 361,296 361,320 357,320 346,301" fill="#f5000f" />
<polygon points="366,300 383,314 381,323 366,312" fill="#f5000f" />
<polygon points="573.3,495 619,541.5 573.3,541.5" fill="#f5000f" />
<polygon points="569.5,467.4 589.8,474.2 625.9,509 631,512 605.6,515.8 573.3,481.7" fill="#f5000f" />
<polygon points="607,519 616,522 611,527 604,522" fill="#f5000f" />
<polygon points="615,527 627,522 631,524 631,541 628,541" fill="#f5000f" />
<polygon points="225,295.6 251.9,295.6 251.9,336.5 225,336.5" fill="#38a62b" />
<polygon points="232.7,219 240,217.6 248,217.8 248,224.2 232.7,224.2" fill="#38a62b" />
<polygon points="246,265.7 251.7,265.7 251.7,271.7 246,271.7" fill="#38a62b" />
<polygon points="420,356 431,356 437,363 432,370 432,380 420,380" fill="#38a62b" />
<polygon points="421,353 425,351 431,356 421,356" fill="#38a62b" />
<polygon points="181.3,410 192,408.5 192,420.5 182,422.7" fill="#38a62b" />
<polygon points="220.3,442.6 240.2,442.6 253,444 253,463.8 250,463.8 244.4,456.7 237.3,452.5 227.4,448.2 220.3,449.6" fill="#38a62b" />
<polygon points="255.8,447.5 263.5,446.8 276.3,454 283.4,459.6 289,458.2 289,478.7 280.5,478.7 269.2,471 255.8,465" fill="#38a62b" />
<polygon points="298.3,420.6 308.2,420.6 308.2,428.4 305.4,432 298.3,432" fill="#38a62b" />
<polygon points="211.3,509.4 220,509.4 226.9,513 226.9,523 211.3,523" fill="#38a62b" />
<polygon points="208.7,476.5 218.7,476.5 218.7,481 208.7,481" fill="#38a62b" />
<polygon points="188.7,313.7 200,315 208.7,318.7 207,322 196,319.5 188,317" fill="#38a62b" />
<polygon points="167,434.8 173.5,438.3 186.3,441.1 193.4,445.4 203.3,448.9 219,449.6 219,475.5 167,475.5" fill="url(#hatch)" />
<polygon points="217,530.6 251,530.6 251,541 217,541" fill="url(#hatch)" />
<polygon points="217.8,172.8 217,166 226,163 294,176 310,167 314,171 312.9,173.5 307.2,177 300.1,181.3 291.6,184.1 281.7,189.1 271.7,190.5 261.8,187.7 256.1,184.1 247.6,179.9 237.7,178.4 234.9,174.2 227.8,167 223.5,166.4" fill="url(#dots)" />
<polygon points="311,193.5 326,193.5 326,199 311,199" fill="url(#dots)" />
<polygon points="314.8,200 358,200.5 365,207.5 366,222 365,228 365,246 349.8,243 345,244.8 339.9,240 339.9,229.6 335.8,227.3 333.5,230.2 329.4,228.5 327.7,219 323.6,213.3 320,204 316.6,205" fill="url(#dots)" />
<polygon points="167,196.5 210,196.5 215,202 221,207 227,212 229.5,217 229,223 227,227 221,228 217,225 212,224 209,221 205,219 202,215 198,215 194,213 191,215 188.5,216.5 188.5,210.5 167,210.5" fill="url(#dots)" />
<polygon points="320,240 324,238.4 330,239.6 335.8,242.5 341.6,244.8 349.8,243 365,246 365,272 438,311 436,324 444,342 438,336 428,330 420,328 408,320 396,310 380,302 367,294 360,284 356,276 350,266 344,262 334.7,258.8 332.3,253 327.7,248.3 321.2,244.8" fill="url(#dots)" />
<polygon points="436,324 454,332 453,346 444,342" fill="url(#dots)" />
<polygon points="484,347 631,347 631,426 624,424 616,416 620,410 612,400 608,406 598,402 590,388 588,378 596,374 610,368 608,362 596,364 592,358 586,354 580,362 570,364 564,370 566,381 562,376 540,374 526,379 500,376 492,372 484,366" fill="url(#dots)" />
<polygon points="167,408.5 179.2,412.8 187.7,417 199,419.9 207.6,424.8 218.9,426.2 231.7,427 241.6,430.5 253,437.6 261.5,442.6 275,448.2 288,456 288,492 275,480.9 264.3,472.3 253,465.2 244.4,459.6 236,453.9 227.4,448.9 217.5,449.6 203.3,448.9 193.4,445.4 186.3,441.1 173.5,438.3 167,434.8" fill="url(#dots)" />
<polygon points="303,480 324,480 324,508 322,508 314,494 303,496" fill="url(#dots)" />
<polygon points="289,462.4 297.6,475.2 297.6,478.7 289,478.7" fill="url(#dots)" />
<polygon points="631,432.5 621.4,441.5 610,448.3 605.6,454 597.7,460.7 610,458.4 619,455 622.5,466.3 621.4,475.3 631,480" fill="url(#dots)" />
<polygon points="235,290 242.5,285.6 255,284.4 260,288.7 258,293.7 252.5,295.6 245,297.5 240,306.2 235,311.2 228.7,311.2 226.9,306.2 231.2,298.7" fill="url(#dots)" />
<polygon points="215,308 219,304 223,304.5 225.6,310 225,316.2 227.5,325 235,330 245,333.7 248,338.7 245,339.4 237.5,333.7 227.5,330 222,328.7 217,326 215,320" fill="url(#dots)" />
<polyline points="232,196.6 311.5,196.6" fill="none" stroke="#ffffff" stroke-width="1.6" stroke-linecap="round" stroke-linejoin="round"/>
<polyline points="232,196.6 232,245" fill="none" stroke="#ffffff" stroke-width="1.6" stroke-linecap="round" stroke-linejoin="round"/>
<polyline points="243.4,180 243.4,196.6" fill="none" stroke="#ffffff" stroke-width="1.6" stroke-linecap="round" stroke-linejoin="round"/>
<polyline points="232,218 250,216.5 264.6,216" fill="none" stroke="#ffffff" stroke-width="1.6" stroke-linecap="round" stroke-linejoin="round"/>
<polyline points="264.6,196.6 264.6,231.6" fill="none" stroke="#ffffff" stroke-width="1.6" stroke-linecap="round" stroke-linejoin="round"/>
<polyline points="264.6,231.6 300,231 307,226.7 314.3,221 313,207" fill="none" stroke="#ffffff" stroke-width="1.6" stroke-linecap="round" stroke-linejoin="round"/>
<polyline points="301.5,184 301.5,196.6 298,211 298,228 300,231" fill="none" stroke="#ffffff" stroke-width="1.6" stroke-linecap="round" stroke-linejoin="round"/>
<polyline points="167,243.2 265,243.5 290,249" fill="none" stroke="#ffffff" stroke-width="1.6" stroke-linecap="round" stroke-linejoin="round"/>
<polyline points="169.5,228 169.5,280" fill="none" stroke="#ffffff" stroke-width="1.6" stroke-linecap="round" stroke-linejoin="round"/>
<polyline points="186,211 186,290" fill="none" stroke="#ffffff" stroke-width="1.6" stroke-linecap="round" stroke-linejoin="round"/>
<polyline points="201.7,243 201.7,285" fill="none" stroke="#ffffff" stroke-width="1.6" stroke-linecap="round" stroke-linejoin="round"/>
<polyline points="217.5,226 217.5,277" fill="none" stroke="#ffffff" stroke-width="1.6" stroke-linecap="round" stroke-linejoin="round"/>
<polyline points="230.7,198 230.7,277" fill="none" stroke="#ffffff" stroke-width="1.6" stroke-linecap="round" stroke-linejoin="round"/>
<polyline points="245.5,231 245.5,272" fill="none" stroke="#ffffff" stroke-width="1.6" stroke-linecap="round" stroke-linejoin="round"/>
<polyline points="259.5,232 259.5,271" fill="none" stroke="#ffffff" stroke-width="1.6" stroke-linecap="round" stroke-linejoin="round"/>
<polyline points="272,240 272,268" fill="none" stroke="#ffffff" stroke-width="1.6" stroke-linecap="round" stroke-linejoin="round"/>
<polyline points="283,243 283,266" fill="none" stroke="#ffffff" stroke-width="1.6" stroke-linecap="round" stroke-linejoin="round"/>
<polyline points="167,211.7 186,211.7" fill="none" stroke="#ffffff" stroke-width="1.6" stroke-linecap="round" stroke-linejoin="round"/>
<polyline points="167,228.4 186,228.4" fill="none" stroke="#ffffff" stroke-width="1.6" stroke-linecap="round" stroke-linejoin="round"/>
<polyline points="284.4,282 284.4,321 297.5,325.4 314.6,331 317.4,331.5" fill="none" stroke="#ffffff" stroke-width="1.6" stroke-linecap="round" stroke-linejoin="round"/>
<polyline points="271.3,288.5 271.3,321" fill="none" stroke="#ffffff" stroke-width="1.6" stroke-linecap="round" stroke-linejoin="round"/>
<polyline points="258,323.3 284.4,323.3" fill="none" stroke="#ffffff" stroke-width="1.6" stroke-linecap="round" stroke-linejoin="round"/>
<polyline points="262,300 262,318" fill="none" stroke="#ffffff" stroke-width="1.6" stroke-linecap="round" stroke-linejoin="round"/>
<polyline points="284.4,284.3 311.7,288.5 328.8,295.6 340,304 347.2,315.5 345.8,326.8 347.5,340 346.2,352.5 342.5,365 340,368.75 338,377.5 338,407" fill="none" stroke="#ffffff" stroke-width="1.6" stroke-linecap="round" stroke-linejoin="round"/>
<polyline points="284.4,299 304.6,301.3 323,306.2 334.4,315.5 343,325.4" fill="none" stroke="#ffffff" stroke-width="1.6" stroke-linecap="round" stroke-linejoin="round"/>
<polyline points="297.5,301.3 299,308.4 304.6,314 306.8,324 306.8,329" fill="none" stroke="#ffffff" stroke-width="1.6" stroke-linecap="round" stroke-linejoin="round"/>
<polyline points="328.8,295.6 323,308.4 320.2,322.6 317.4,336.7 313.75,350 312,352.5 312,407.5" fill="none" stroke="#ffffff" stroke-width="1.6" stroke-linecap="round" stroke-linejoin="round"/>
<polyline points="254,352 262,349 276.25,352.5 281,348.75 286,347 312.5,347 320,352.5 330,360 340,367 345,368.75 370,368.75" fill="none" stroke="#ffffff" stroke-width="1.6" stroke-linecap="round" stroke-linejoin="round"/>
<polyline points="255,343.8 269.2,343.8" fill="none" stroke="#ffffff" stroke-width="1.6" stroke-linecap="round" stroke-linejoin="round"/>
<polyline points="276.25,352.5 283.75,365" fill="none" stroke="#ffffff" stroke-width="1.6" stroke-linecap="round" stroke-linejoin="round"/>
<polyline points="334.4,332.5 346,332" fill="none" stroke="#ffffff" stroke-width="1.6" stroke-linecap="round" stroke-linejoin="round"/>
<polyline points="328.75,361.25 322.5,372.5" fill="none" stroke="#ffffff" stroke-width="1.6" stroke-linecap="round" stroke-linejoin="round"/>
<polyline points="345.8,323 354,318.6" fill="none" stroke="#ffffff" stroke-width="1.6" stroke-linecap="round" stroke-linejoin="round"/>
<polyline points="298.75,347 298.75,366" fill="none" stroke="#ffffff" stroke-width="1.6" stroke-linecap="round" stroke-linejoin="round"/>
<polyline points="300,382.5 312,382.5" fill="none" stroke="#ffffff" stroke-width="1.6" stroke-linecap="round" stroke-linejoin="round"/>
<polyline points="290,393 311.25,393.75" fill="none" stroke="#ffffff" stroke-width="1.6" stroke-linecap="round" stroke-linejoin="round"/>
<polyline points="338,402 360,402" fill="none" stroke="#ffffff" stroke-width="1.6" stroke-linecap="round" stroke-linejoin="round"/>
<polyline points="360.6,369 360.6,407" fill="none" stroke="#ffffff" stroke-width="1.6" stroke-linecap="round" stroke-linejoin="round"/>
<polyline points="326.25,395 338,395" fill="none" stroke="#ffffff" stroke-width="1.6" stroke-linecap="round" stroke-linejoin="round"/>
<polyline points="227.4,337.8 227.4,359" fill="none" stroke="#ffffff" stroke-width="1.6" stroke-linecap="round" stroke-linejoin="round"/>
<polyline points="222,363.3 207.6,364 200.5,373.2 193.4,393 193.4,404" fill="none" stroke="#ffffff" stroke-width="1.6" stroke-linecap="round" stroke-linejoin="round"/>
<polyline points="222,379 255.8,379 264.3,381.7 275,388.8 286,390" fill="none" stroke="#ffffff" stroke-width="1.6" stroke-linecap="round" stroke-linejoin="round"/>
<polyline points="250,379 250,404.4" fill="none" stroke="#ffffff" stroke-width="1.6" stroke-linecap="round" stroke-linejoin="round"/>
<polyline points="224.6,354.8 240.2,353.4 245.9,360.5 255.8,364 267.1,361.9 275,354.8 280,350" fill="none" stroke="#ffffff" stroke-width="1.6" stroke-linecap="round" stroke-linejoin="round"/>
<polyline points="240.2,353.4 250.1,346.3 264.3,344.9 275,352" fill="none" stroke="#ffffff" stroke-width="1.6" stroke-linecap="round" stroke-linejoin="round"/>
<polyline points="167,336.6 203,336.6" fill="none" stroke="#ffffff" stroke-width="1.6" stroke-linecap="round" stroke-linejoin="round"/>
<polyline points="167,364 176,363 180,358" fill="none" stroke="#ffffff" stroke-width="1.6" stroke-linecap="round" stroke-linejoin="round"/>
<polyline points="222,392 250,392" fill="none" stroke="#ffffff" stroke-width="1.6" stroke-linecap="round" stroke-linejoin="round"/>
<polyline points="205,392 205,404" fill="none" stroke="#ffffff" stroke-width="1.6" stroke-linecap="round" stroke-linejoin="round"/>
<polyline points="167,379.6 175,379.6 175,390 167,390" fill="none" stroke="#ffffff" stroke-width="1.6" stroke-linecap="round" stroke-linejoin="round"/>
<polyline points="167,406.6 326,407 335.9,403.4 345,402.6 362,404 404,405 427,405" fill="none" stroke="#ffffff" stroke-width="1.6" stroke-linecap="round" stroke-linejoin="round"/>
<polyline points="279.8,407 279.8,417" fill="none" stroke="#ffffff" stroke-width="1.6" stroke-linecap="round" stroke-linejoin="round"/>
<polyline points="311,400 311,417" fill="none" stroke="#ffffff" stroke-width="1.6" stroke-linecap="round" stroke-linejoin="round"/>
<polyline points="279,417 323,417 327.3,422.7 330.2,434 332.3,437.6" fill="none" stroke="#ffffff" stroke-width="1.6" stroke-linecap="round" stroke-linejoin="round"/>
<polyline points="279.8,417 277.7,418.4 269.2,435.5 266.3,439.7" fill="none" stroke="#ffffff" stroke-width="1.6" stroke-linecap="round" stroke-linejoin="round"/>
<polyline points="269.2,429.8 283.4,432.6 301.8,433.3 308.9,431.2 311,417" fill="none" stroke="#ffffff" stroke-width="1.6" stroke-linecap="round" stroke-linejoin="round"/>
<polyline points="292.6,433 292.6,444" fill="none" stroke="#ffffff" stroke-width="1.6" stroke-linecap="round" stroke-linejoin="round"/>
<polyline points="255,436.2 270.6,442.6 293.3,444.7" fill="none" stroke="#ffffff" stroke-width="1.6" stroke-linecap="round" stroke-linejoin="round"/>
<polyline points="363,320 363,441" fill="none" stroke="#ffffff" stroke-width="1.6" stroke-linecap="round" stroke-linejoin="round"/>
<polyline points="363,392 404,392" fill="none" stroke="#ffffff" stroke-width="1.6" stroke-linecap="round" stroke-linejoin="round"/>
<polyline points="404,404 404,350 406,346.5 413,346 417,350 417,404" fill="none" stroke="#ffffff" stroke-width="1.6" stroke-linecap="round" stroke-linejoin="round"/>
<polyline points="404,369 419,369" fill="none" stroke="#ffffff" stroke-width="1.6" stroke-linecap="round" stroke-linejoin="round"/>
<polyline points="404,383 424,383" fill="none" stroke="#ffffff" stroke-width="1.6" stroke-linecap="round" stroke-linejoin="round"/>
<polyline points="382,405 382,430 392,430" fill="none" stroke="#ffffff" stroke-width="1.6" stroke-linecap="round" stroke-linejoin="round"/>
<polyline points="376,420 392,420" fill="none" stroke="#ffffff" stroke-width="1.6" stroke-linecap="round" stroke-linejoin="round"/>
<polyline points="384,318 392,340 404,352" fill="none" stroke="#ffffff" stroke-width="1.6" stroke-linecap="round" stroke-linejoin="round"/>
<polyline points="404,334 398,346 404,352" fill="none" stroke="#ffffff" stroke-width="1.6" stroke-linecap="round" stroke-linejoin="round"/>
<polyline points="167,483 221,483 225,480 232.5,476 252.5,476" fill="none" stroke="#ffffff" stroke-width="1.6" stroke-linecap="round" stroke-linejoin="round"/>
<polyline points="222.5,483 222.5,511" fill="none" stroke="#ffffff" stroke-width="1.6" stroke-linecap="round" stroke-linejoin="round"/>
<polyline points="211.3,483.8 211.3,507.5" fill="none" stroke="#ffffff" stroke-width="1.6" stroke-linecap="round" stroke-linejoin="round"/>
<polyline points="209.4,511 209.4,529" fill="none" stroke="#ffffff" stroke-width="1.6" stroke-linecap="round" stroke-linejoin="round"/>
<polyline points="172.5,507.5 218.8,507.5" fill="none" stroke="#ffffff" stroke-width="1.6" stroke-linecap="round" stroke-linejoin="round"/>
<polyline points="173,497 173,522" fill="none" stroke="#ffffff" stroke-width="1.6" stroke-linecap="round" stroke-linejoin="round"/>
<polyline points="186,497 186,522" fill="none" stroke="#ffffff" stroke-width="1.6" stroke-linecap="round" stroke-linejoin="round"/>
<polyline points="196,497 196,540" fill="none" stroke="#ffffff" stroke-width="1.6" stroke-linecap="round" stroke-linejoin="round"/>
<polyline points="167,527 195,527" fill="none" stroke="#ffffff" stroke-width="1.6" stroke-linecap="round" stroke-linejoin="round"/>
<polyline points="209,525 235,525" fill="none" stroke="#ffffff" stroke-width="1.6" stroke-linecap="round" stroke-linejoin="round"/>
<polyline points="174.4,496.6 183.8,496.6" fill="none" stroke="#ffffff" stroke-width="1.6" stroke-linecap="round" stroke-linejoin="round"/>
<polyline points="190,496.6 211,496.6" fill="none" stroke="#ffffff" stroke-width="1.6" stroke-linecap="round" stroke-linejoin="round"/>
<polyline points="222.5,487.5 253,487.5" fill="none" stroke="#ffffff" stroke-width="1.6" stroke-linecap="round" stroke-linejoin="round"/>
<polyline points="222.5,499.4 253,499.4" fill="none" stroke="#ffffff" stroke-width="1.6" stroke-linecap="round" stroke-linejoin="round"/>
<polyline points="222.5,510 253,510" fill="none" stroke="#ffffff" stroke-width="1.6" stroke-linecap="round" stroke-linejoin="round"/>
<polyline points="238,476 238,487" fill="none" stroke="#ffffff" stroke-width="1.6" stroke-linecap="round" stroke-linejoin="round"/>
<polyline points="458,374 500,392 524,396 536,402" fill="none" stroke="#ffffff" stroke-width="1.6" stroke-linecap="round" stroke-linejoin="round"/>
<polyline points="524,396 540,388 566,384" fill="none" stroke="#ffffff" stroke-width="1.6" stroke-linecap="round" stroke-linejoin="round"/>
<polyline points="538.3,405 548.3,416.7 555,425 560,438.3 568.3,463.3" fill="none" stroke="#ffffff" stroke-width="1.6" stroke-linecap="round" stroke-linejoin="round"/>
<polyline points="548,416.7 562,417" fill="none" stroke="#ffffff" stroke-width="1.6" stroke-linecap="round" stroke-linejoin="round"/>
<polyline points="510,425 555,425" fill="none" stroke="#ffffff" stroke-width="1.6" stroke-linecap="round" stroke-linejoin="round"/>
<polyline points="535,430 558.3,453.3" fill="none" stroke="#ffffff" stroke-width="1.6" stroke-linecap="round" stroke-linejoin="round"/>
<polyline points="568.3,464 580,467.5 592,465.5 606,459" fill="none" stroke="#ffffff" stroke-width="1.6" stroke-linecap="round" stroke-linejoin="round"/>
<polyline points="592,466 606,480 620,494 631,503" fill="none" stroke="#ffffff" stroke-width="1.6" stroke-linecap="round" stroke-linejoin="round"/>
<polyline points="252.8,407 252.8,541" fill="none" stroke="#ffffff" stroke-width="2" stroke-linecap="round" stroke-linejoin="round"/>
<polyline points="231,277 223.75,290 218.75,303.75 210.5,325 204,340 198.2,355 193.5,368 183,387.4 176,404.4 174,409" fill="none" stroke="#ffffff" stroke-width="6" stroke-linecap="round" stroke-linejoin="round"/>
<polyline points="222,329 222,404.4" fill="none" stroke="#ffffff" stroke-width="2.8" stroke-linecap="round" stroke-linejoin="round"/>
<polyline points="167,307.5 177.5,300 185,297.5 202.5,298.7 215,296.2 220,293.7" fill="none" stroke="#ffffff" stroke-width="2.8" stroke-linecap="round" stroke-linejoin="round"/>
<polyline points="284,264 300,267.5 326,276 350,286.5 365,297.5 382,311 408,334 424,346.5 440,359 458.3,376.5 475,393.8 491.7,411 504,420 559,475 574,490 621,541 640,562" fill="none" stroke="#ffffff" stroke-width="5.6" stroke-linecap="round" stroke-linejoin="round"/>
<polygon points="506.7,415.8 565.8,472.5 573.3,481.7 605.6,515.8 633,542 619,542 574,496.7 572.5,493.3 500.8,419.2" fill="#ffffff" />
<polyline points="167,257.5 250,257.5 272,260 290,264" fill="none" stroke="#ffffff" stroke-width="2.6" stroke-linecap="round" stroke-linejoin="round"/>
<polyline points="167,277 229.5,277 235.5,274 265,270.5 284,264.5" fill="none" stroke="#ffffff" stroke-width="3.8" stroke-linecap="round" stroke-linejoin="round"/>
<polyline points="290,263 309,239.5 318,236 338,236.5" fill="none" stroke="#ffffff" stroke-width="2.6" stroke-linecap="round" stroke-linejoin="round"/>
<polyline points="300,236 308,230 316,222 318,214" fill="none" stroke="#ffffff" stroke-width="2" stroke-linecap="round" stroke-linejoin="round"/>
<polyline points="304,245 320,249 333,252" fill="none" stroke="#ffffff" stroke-width="2" stroke-linecap="round" stroke-linejoin="round"/>
<polyline points="293,257 320,264.4 345,271.6" fill="none" stroke="#ffffff" stroke-width="1.2" stroke-linecap="round" stroke-linejoin="round"/>
<polyline points="331,149 327,200" fill="none" stroke="#a6a6a6" stroke-width="0.5" />
<polyline points="443.7,149 432.5,187.5 422.5,217.5 406,237.5 405,245 417.5,275 430,292.5 446,306" fill="none" stroke="#a6a6a6" stroke-width="0.5" />
<polyline points="446.5,149 435.2,188 425,219 409,239 408,245 420,274 432.5,291 449,304" fill="none" stroke="#a6a6a6" stroke-width="0.5" />
<polyline points="382.5,157.5 435,157.5" fill="none" stroke="#a6a6a6" stroke-width="0.5" />
<polyline points="382.5,162.5 501,162.5" fill="none" stroke="#a6a6a6" stroke-width="0.5" />
<polyline points="382.5,166 437,166.5" fill="none" stroke="#a6a6a6" stroke-width="0.5" />
<polyline points="360,175 436,176" fill="none" stroke="#a6a6a6" stroke-width="0.5" />
<polyline points="382.5,157.5 382.5,175" fill="none" stroke="#a6a6a6" stroke-width="0.5" />
<polyline points="405,149 405,166" fill="none" stroke="#a6a6a6" stroke-width="0.5" />
<polyline points="420,149 420,166" fill="none" stroke="#a6a6a6" stroke-width="0.5" />
<polyline points="366,149 366,157" fill="none" stroke="#a6a6a6" stroke-width="0.5" />
<polyline points="458.8,162.5 458.8,257.5" fill="none" stroke="#a6a6a6" stroke-width="0.5" />
<polyline points="501,162.5 501,275" fill="none" stroke="#a6a6a6" stroke-width="0.5" />
<polyline points="458.8,257.5 501,257.5" fill="none" stroke="#a6a6a6" stroke-width="0.5" />
<polyline points="492,149 492,162.5" fill="none" stroke="#a6a6a6" stroke-width="0.5" />
<polyline points="501,206 553,208" fill="none" stroke="#a6a6a6" stroke-width="0.5" />
<polyline points="521,207 521,252.5" fill="none" stroke="#a6a6a6" stroke-width="0.5" />
<polyline points="501,252.5 553,252.5" fill="none" stroke="#a6a6a6" stroke-width="0.5" />
<polyline points="540,246 540,252.5" fill="none" stroke="#a6a6a6" stroke-width="0.5" />
<polyline points="546,246 546,252.5" fill="none" stroke="#a6a6a6" stroke-width="0.5" />
<polyline points="540,246 553,246" fill="none" stroke="#a6a6a6" stroke-width="0.5" />
<polyline points="470,275 553,275" fill="none" stroke="#a6a6a6" stroke-width="0.5" />
<polyline points="435,290 452,280 470,275" fill="none" stroke="#a6a6a6" stroke-width="0.5" />
<polyline points="435,286 450,277 468,271 553,271" fill="none" stroke="#a6a6a6" stroke-width="0.5" />
<polyline points="506,252.5 506,275" fill="none" stroke="#a6a6a6" stroke-width="0.5" />
<polyline points="511,252.5 511,275" fill="none" stroke="#a6a6a6" stroke-width="0.5" />
<polyline points="516,252.5 516,275" fill="none" stroke="#a6a6a6" stroke-width="0.5" />
<polyline points="522,252.5 522,275" fill="none" stroke="#a6a6a6" stroke-width="0.5" />
<polyline points="528,252.5 528,275" fill="none" stroke="#a6a6a6" stroke-width="0.5" />
<polyline points="534,252.5 534,275" fill="none" stroke="#a6a6a6" stroke-width="0.5" />
<polyline points="540,252.5 540,275" fill="none" stroke="#a6a6a6" stroke-width="0.5" />
<polyline points="546,252.5 546,275" fill="none" stroke="#a6a6a6" stroke-width="0.5" />
<polyline points="468,258 468,271" fill="none" stroke="#a6a6a6" stroke-width="0.5" />
<polyline points="476,258 476,271" fill="none" stroke="#a6a6a6" stroke-width="0.5" />
<polyline points="484,258 484,271" fill="none" stroke="#a6a6a6" stroke-width="0.5" />
<polyline points="492,258 492,271" fill="none" stroke="#a6a6a6" stroke-width="0.5" />
<polyline points="440,258 440,268 446,266" fill="none" stroke="#a6a6a6" stroke-width="0.5" />
<polyline points="432,186 448,188 447,197 431,195" fill="none" stroke="#a6a6a6" stroke-width="0.5" />
<polyline points="430,196 458.8,200" fill="none" stroke="#a6a6a6" stroke-width="0.5" />
<polyline points="426,212 458.8,236" fill="none" stroke="#a6a6a6" stroke-width="0.5" />
<polyline points="440,227.5 440,258" fill="none" stroke="#a6a6a6" stroke-width="0.5" />
<polyline points="422,224 440,232" fill="none" stroke="#a6a6a6" stroke-width="0.5" />
<polyline points="364,182 372,192 378,190 392,180 402,183 412,196 420,207" fill="none" stroke="#a6a6a6" stroke-width="0.5" />
<polyline points="368,178 384,172 394,176 404,180" fill="none" stroke="#a6a6a6" stroke-width="0.5" />
<polyline points="372,192 380,205 392,200 398,208 410,203" fill="none" stroke="#a6a6a6" stroke-width="0.5" />
<polyline points="376,186 380,196" fill="none" stroke="#a6a6a6" stroke-width="0.5" />
<polyline points="380,184 384,194" fill="none" stroke="#a6a6a6" stroke-width="0.5" />
<polyline points="384,182 388,192" fill="none" stroke="#a6a6a6" stroke-width="0.5" />
<polyline points="388,180 392,190" fill="none" stroke="#a6a6a6" stroke-width="0.5" />
<polyline points="400,200 408,213" fill="none" stroke="#a6a6a6" stroke-width="0.5" />
<polyline points="404,198 412,211" fill="none" stroke="#a6a6a6" stroke-width="0.5" />
<polyline points="408,196 416,209" fill="none" stroke="#a6a6a6" stroke-width="0.5" />
<polyline points="398,208 404,218 418,212" fill="none" stroke="#a6a6a6" stroke-width="0.5" />
<polyline points="384,206 398,228 408,244 412,262 424,284 436,296" fill="none" stroke="#a6a6a6" stroke-width="0.5" />
<polyline points="388,204 402,226 412,243 416,260 428,282 440,294" fill="none" stroke="#a6a6a6" stroke-width="0.5" />
<polyline points="366,200 380,210 372,220 366,214" fill="none" stroke="#a6a6a6" stroke-width="0.5" />
<polyline points="366,232 400,226" fill="none" stroke="#a6a6a6" stroke-width="0.5" />
<polyline points="366,252 406,258 436,258" fill="none" stroke="#a6a6a6" stroke-width="0.5" />
<polyline points="366,262 400,268 432,272" fill="none" stroke="#a6a6a6" stroke-width="0.5" />
<polyline points="440,232 436,258" fill="none" stroke="#a6a6a6" stroke-width="0.5" />
<polyline points="366,270 398,280 430,292" fill="none" stroke="#a6a6a6" stroke-width="0.5" />
<polyline points="420,262 400,246" fill="none" stroke="#a6a6a6" stroke-width="0.5" />
<polyline points="470,276 466,300 462,346" fill="none" stroke="#a6a6a6" stroke-width="0.5" />
<polyline points="494,276 494,346" fill="none" stroke="#a6a6a6" stroke-width="0.5" />
<polyline points="526,276 524,346" fill="none" stroke="#a6a6a6" stroke-width="0.5" />
<polyline points="452,300 448,330" fill="none" stroke="#a6a6a6" stroke-width="0.5" />
<polyline points="556,318 556,346" fill="none" stroke="#a6a6a6" stroke-width="0.5" />
<polyline points="588,318 586,346" fill="none" stroke="#a6a6a6" stroke-width="0.5" />
<polyline points="610,318 608,346" fill="none" stroke="#a6a6a6" stroke-width="0.5" />
<polyline points="598,318 598,332 631,334" fill="none" stroke="#a6a6a6" stroke-width="0.5" />
<polyline points="553,300 631,300" fill="none" stroke="#a6a6a6" stroke-width="0.5" />
<polyline points="556,276 556,300" fill="none" stroke="#a6a6a6" stroke-width="0.5" />
<polyline points="440,294 470,282 494,280" fill="none" stroke="#a6a6a6" stroke-width="0.5" />
<polyline points="426,415 426,415" fill="none" stroke="#a6a6a6" stroke-width="0.5" />
<polyline points="315,447 315,541" fill="none" stroke="#a6a6a6" stroke-width="0.5" />
<polyline points="341,441 341,500" fill="none" stroke="#a6a6a6" stroke-width="0.5" />
<polyline points="341,465 341,483 358,483" fill="none" stroke="#a6a6a6" stroke-width="0.5" />
<polyline points="300,516 358,516" fill="none" stroke="#a6a6a6" stroke-width="0.5" />
<polyline points="324,530 358,530" fill="none" stroke="#a6a6a6" stroke-width="0.5" />
<polyline points="392,483 392,541" fill="none" stroke="#a6a6a6" stroke-width="0.5" />
<polyline points="346,480 346,492 358,492" fill="none" stroke="#a6a6a6" stroke-width="0.5" />
<polyline points="346,516 346,528" fill="none" stroke="#a6a6a6" stroke-width="0.5" />
<polyline points="356.5,441 356.5,541" fill="none" stroke="#a6a6a6" stroke-width="0.5" />
<polyline points="359.5,441 359.5,541" fill="none" stroke="#a6a6a6" stroke-width="0.5" />
<polyline points="254,484 300,484" fill="none" stroke="#a6a6a6" stroke-width="0.5" />
<polyline points="254,500 288,500" fill="none" stroke="#a6a6a6" stroke-width="0.5" />
<polyline points="552,417 620,417" fill="none" stroke="#a6a6a6" stroke-width="0.5" />
<polyline points="566,417 566,440" fill="none" stroke="#a6a6a6" stroke-width="0.5" />
<polyline points="540,430 631,432" fill="none" stroke="#a6a6a6" stroke-width="0.5" />
<polyline points="578,417 578,432" fill="none" stroke="#a6a6a6" stroke-width="0.5" />
<polyline points="600,384 600,432" fill="none" stroke="#a6a6a6" stroke-width="0.5" />
<polyline points="576,384 600,384" fill="none" stroke="#a6a6a6" stroke-width="0.5" />
<polyline points="496.4,420 496.4,541" fill="none" stroke="#c4c4c4" stroke-width="0.6" />
<polyline points="426,484.5 562,484.5" fill="none" stroke="#c4c4c4" stroke-width="0.6" />
<g stroke="#ffffff" stroke-width="0.5" opacity="0.8">
<line x1="224" y1="489" x2="224" y2="498"/>
<line x1="227.6" y1="489" x2="227.6" y2="498"/>
<line x1="231.2" y1="489" x2="231.2" y2="498"/>
<line x1="234.8" y1="489" x2="234.8" y2="498"/>
<line x1="238.4" y1="489" x2="238.4" y2="498"/>
<line x1="242" y1="489" x2="242" y2="498"/>
<line x1="245.6" y1="489" x2="245.6" y2="498"/>
<line x1="249.2" y1="489" x2="249.2" y2="498"/>
<line x1="224" y1="489" x2="251" y2="489"/>
<line x1="224" y1="493.5" x2="251" y2="493.5"/>
<line x1="224" y1="498" x2="251" y2="498"/>
</g>
<g stroke="#ffffff" stroke-width="0.5" opacity="0.8">
<line x1="224" y1="501" x2="224" y2="509"/>
<line x1="227.6" y1="501" x2="227.6" y2="509"/>
<line x1="231.2" y1="501" x2="231.2" y2="509"/>
<line x1="234.8" y1="501" x2="234.8" y2="509"/>
<line x1="238.4" y1="501" x2="238.4" y2="509"/>
<line x1="242" y1="501" x2="242" y2="509"/>
<line x1="245.6" y1="501" x2="245.6" y2="509"/>
<line x1="249.2" y1="501" x2="249.2" y2="509"/>
<line x1="224" y1="501" x2="251" y2="501"/>
<line x1="224" y1="505" x2="251" y2="505"/>
<line x1="224" y1="509" x2="251" y2="509"/>
</g>
<g stroke="#ffffff" stroke-width="0.5" opacity="0.8">
<line x1="228" y1="512" x2="228" y2="523"/>
<line x1="231.6" y1="512" x2="231.6" y2="523"/>
<line x1="235.2" y1="512" x2="235.2" y2="523"/>
<line x1="238.8" y1="512" x2="238.8" y2="523"/>
<line x1="242.4" y1="512" x2="242.4" y2="523"/>
<line x1="246" y1="512" x2="246" y2="523"/>
<line x1="249.6" y1="512" x2="249.6" y2="523"/>
<line x1="228" y1="512" x2="251" y2="512"/>
<line x1="228" y1="517.5" x2="251" y2="517.5"/>
<line x1="228" y1="523" x2="251" y2="523"/>
</g>
<g stroke="#ffffff" stroke-width="0.5" opacity="0.8">
<line x1="168" y1="499" x2="168" y2="540"/>
<line x1="171.4" y1="499" x2="171.4" y2="540"/>
<line x1="174.8" y1="499" x2="174.8" y2="540"/>
<line x1="178.2" y1="499" x2="178.2" y2="540"/>
<line x1="181.6" y1="499" x2="181.6" y2="540"/>
<line x1="185" y1="499" x2="185" y2="540"/>
<line x1="188.4" y1="499" x2="188.4" y2="540"/>
<line x1="191.8" y1="499" x2="191.8" y2="540"/>
<line x1="195.2" y1="499" x2="195.2" y2="540"/>
<line x1="198.6" y1="499" x2="198.6" y2="540"/>
<line x1="202" y1="499" x2="202" y2="540"/>
<line x1="205.4" y1="499" x2="205.4" y2="540"/>
<line x1="168" y1="499" x2="208" y2="499"/>
<line x1="168" y1="539" x2="208" y2="539"/>
</g>
<g stroke="#ffffff" stroke-width="0.5" opacity="0.8">
<line x1="168" y1="509" x2="168" y2="526"/>
<line x1="208" y1="509" x2="208" y2="526"/>
<line x1="168" y1="509" x2="208" y2="509"/>
<line x1="168" y1="517" x2="208" y2="517"/>
<line x1="168" y1="525" x2="208" y2="525"/>
</g>
<g stroke="#ffffff" stroke-width="0.5" opacity="0.8">
<line x1="198" y1="528" x2="198" y2="540"/>
<line x1="201.4" y1="528" x2="201.4" y2="540"/>
<line x1="204.8" y1="528" x2="204.8" y2="540"/>
<line x1="208.2" y1="528" x2="208.2" y2="540"/>
<line x1="211.6" y1="528" x2="211.6" y2="540"/>
<line x1="215" y1="528" x2="215" y2="540"/>
<line x1="198" y1="528" x2="216" y2="528"/>
</g>
<g stroke="#ffffff" stroke-width="0.5" opacity="0.85">
<line x1="405.5" y1="350" x2="405.5" y2="403"/>
<line x1="405.5" y1="350" x2="416" y2="350"/>
<line x1="405.5" y1="353.6" x2="416" y2="353.6"/>
<line x1="405.5" y1="357.2" x2="416" y2="357.2"/>
<line x1="405.5" y1="360.8" x2="416" y2="360.8"/>
<line x1="405.5" y1="364.4" x2="416" y2="364.4"/>
<line x1="405.5" y1="368" x2="416" y2="368"/>
<line x1="405.5" y1="371.6" x2="416" y2="371.6"/>
<line x1="405.5" y1="375.2" x2="416" y2="375.2"/>
<line x1="405.5" y1="378.8" x2="416" y2="378.8"/>
<line x1="405.5" y1="382.4" x2="416" y2="382.4"/>
<line x1="405.5" y1="386" x2="416" y2="386"/>
<line x1="405.5" y1="389.6" x2="416" y2="389.6"/>
<line x1="405.5" y1="393.2" x2="416" y2="393.2"/>
<line x1="405.5" y1="396.8" x2="416" y2="396.8"/>
<line x1="405.5" y1="400.4" x2="416" y2="400.4"/>
</g>
<g stroke="#ffffff" stroke-width="0.5" opacity="0.85">
<line x1="418.5" y1="384" x2="418.5" y2="403"/>
<line x1="418.5" y1="384" x2="431" y2="384"/>
<line x1="418.5" y1="387.6" x2="431" y2="387.6"/>
<line x1="418.5" y1="391.2" x2="431" y2="391.2"/>
<line x1="418.5" y1="394.8" x2="431" y2="394.8"/>
<line x1="418.5" y1="398.4" x2="431" y2="398.4"/>
<line x1="418.5" y1="402" x2="431" y2="402"/>
</g>
<g stroke="#ffffff" stroke-width="0.5" opacity="0.7">
<line x1="396" y1="330" x2="396" y2="346"/>
<line x1="399.6" y1="330" x2="399.6" y2="346"/>
<line x1="403.2" y1="330" x2="403.2" y2="346"/>
<line x1="406.8" y1="330" x2="406.8" y2="346"/>
<line x1="410.4" y1="330" x2="410.4" y2="346"/>
<line x1="414" y1="330" x2="414" y2="346"/>
<line x1="417.6" y1="330" x2="417.6" y2="346"/>
<line x1="396" y1="330" x2="420" y2="330"/>
</g>
<g stroke="#c9848e" stroke-width="0.4" opacity="0.8">
<line x1="171" y1="245" x2="171" y2="256"/>
<line x1="175.5" y1="245" x2="175.5" y2="256"/>
<line x1="180" y1="245" x2="180" y2="256"/>
<line x1="184.5" y1="245" x2="184.5" y2="256"/>
<line x1="171" y1="245" x2="185" y2="245"/>
<line x1="171" y1="250.5" x2="185" y2="250.5"/>
<line x1="171" y1="256" x2="185" y2="256"/>
</g>
<g stroke="#c9848e" stroke-width="0.4" opacity="0.8">
<line x1="188" y1="245" x2="188" y2="256"/>
<line x1="192" y1="245" x2="192" y2="256"/>
<line x1="196" y1="245" x2="196" y2="256"/>
<line x1="200" y1="245" x2="200" y2="256"/>
<line x1="188" y1="245" x2="200" y2="245"/>
<line x1="188" y1="250.5" x2="200" y2="250.5"/>
<line x1="188" y1="256" x2="200" y2="256"/>
</g>
<g stroke="#c9848e" stroke-width="0.4" opacity="0.8">
<line x1="203.5" y1="245" x2="203.5" y2="256"/>
<line x1="207.5" y1="245" x2="207.5" y2="256"/>
<line x1="211.5" y1="245" x2="211.5" y2="256"/>
<line x1="215.5" y1="245" x2="215.5" y2="256"/>
<line x1="203.5" y1="245" x2="216" y2="245"/>
<line x1="203.5" y1="250.5" x2="216" y2="250.5"/>
<line x1="203.5" y1="256" x2="216" y2="256"/>
</g>
<g stroke="#c9848e" stroke-width="0.4" opacity="0.8">
<line x1="219" y1="245" x2="219" y2="256"/>
<line x1="224" y1="245" x2="224" y2="256"/>
<line x1="229" y1="245" x2="229" y2="256"/>
<line x1="219" y1="245" x2="229" y2="245"/>
<line x1="219" y1="250.5" x2="229" y2="250.5"/>
<line x1="219" y1="256" x2="229" y2="256"/>
</g>
<g stroke="#c9848e" stroke-width="0.4" opacity="0.8">
<line x1="232.5" y1="245" x2="232.5" y2="256"/>
<line x1="238" y1="245" x2="238" y2="256"/>
<line x1="243.5" y1="245" x2="243.5" y2="256"/>
<line x1="232.5" y1="245" x2="243.5" y2="245"/>
<line x1="232.5" y1="250.5" x2="243.5" y2="250.5"/>
<line x1="232.5" y1="256" x2="243.5" y2="256"/>
</g>
<g stroke="#c9848e" stroke-width="0.4" opacity="0.8">
<line x1="247" y1="245" x2="247" y2="256"/>
<line x1="252.5" y1="245" x2="252.5" y2="256"/>
<line x1="258" y1="245" x2="258" y2="256"/>
<line x1="247" y1="245" x2="258" y2="245"/>
<line x1="247" y1="250.5" x2="258" y2="250.5"/>
<line x1="247" y1="256" x2="258" y2="256"/>
</g>
<g stroke="#c9848e" stroke-width="0.4" opacity="0.8">
<line x1="171" y1="259.5" x2="171" y2="275"/>
<line x1="178" y1="259.5" x2="178" y2="275"/>
<line x1="185" y1="259.5" x2="185" y2="275"/>
<line x1="171" y1="259.5" x2="185" y2="259.5"/>
<line x1="171" y1="264.5" x2="185" y2="264.5"/>
<line x1="171" y1="269.5" x2="185" y2="269.5"/>
<line x1="171" y1="274.5" x2="185" y2="274.5"/>
</g>
<g stroke="#c9848e" stroke-width="0.4" opacity="0.8">
<line x1="188" y1="259.5" x2="188" y2="275"/>
<line x1="194" y1="259.5" x2="194" y2="275"/>
<line x1="200" y1="259.5" x2="200" y2="275"/>
<line x1="188" y1="259.5" x2="200" y2="259.5"/>
<line x1="188" y1="266.5" x2="200" y2="266.5"/>
<line x1="188" y1="273.5" x2="200" y2="273.5"/>
</g>
<g stroke="#c9848e" stroke-width="0.4" opacity="0.8">
<line x1="203.5" y1="259.5" x2="203.5" y2="275"/>
<line x1="209.9" y1="259.5" x2="209.9" y2="275"/>
<line x1="216.3" y1="259.5" x2="216.3" y2="275"/>
<line x1="222.7" y1="259.5" x2="222.7" y2="275"/>
<line x1="203.5" y1="259.5" x2="229" y2="259.5"/>
<line x1="203.5" y1="267" x2="229" y2="267"/>
<line x1="203.5" y1="274.5" x2="229" y2="274.5"/>
</g>
<g stroke="#c9848e" stroke-width="0.4" opacity="0.8">
<line x1="232.5" y1="259.5" x2="232.5" y2="264.5"/>
<line x1="238" y1="259.5" x2="238" y2="264.5"/>
<line x1="243.5" y1="259.5" x2="243.5" y2="264.5"/>
<line x1="232.5" y1="259.5" x2="243.5" y2="259.5"/>
<line x1="232.5" y1="264.5" x2="243.5" y2="264.5"/>
</g>
<g stroke="#c9848e" stroke-width="0.4" opacity="0.8">
<line x1="219" y1="229" x2="219" y2="242"/>
<line x1="224" y1="229" x2="224" y2="242"/>
<line x1="229" y1="229" x2="229" y2="242"/>
<line x1="219" y1="229" x2="229" y2="229"/>
<line x1="219" y1="235.5" x2="229" y2="235.5"/>
<line x1="219" y1="242" x2="229" y2="242"/>
</g>
<g stroke="#c9848e" stroke-width="0.4" opacity="0.8">
<line x1="232.5" y1="239.5" x2="232.5" y2="242"/>
<line x1="237.5" y1="239.5" x2="237.5" y2="242"/>
<line x1="242.5" y1="239.5" x2="242.5" y2="242"/>
<line x1="247.5" y1="239.5" x2="247.5" y2="242"/>
<line x1="252.5" y1="239.5" x2="252.5" y2="242"/>
<line x1="257.5" y1="239.5" x2="257.5" y2="242"/>
<line x1="232.5" y1="239.5" x2="258" y2="239.5"/>
</g>
<g stroke="#c9848e" stroke-width="0.4" opacity="0.8">
<line x1="171" y1="230" x2="171" y2="242"/>
<line x1="178" y1="230" x2="178" y2="242"/>
<line x1="185" y1="230" x2="185" y2="242"/>
<line x1="171" y1="230" x2="185" y2="230"/>
<line x1="171" y1="236" x2="185" y2="236"/>
<line x1="171" y1="242" x2="185" y2="242"/>
</g>
<g stroke="#b06f10" stroke-width="0.4" opacity="0.8">
<line x1="168" y1="214" x2="168" y2="226.5"/>
<line x1="173.3" y1="214" x2="173.3" y2="226.5"/>
<line x1="178.6" y1="214" x2="178.6" y2="226.5"/>
<line x1="183.9" y1="214" x2="183.9" y2="226.5"/>
<line x1="168" y1="214" x2="184" y2="214"/>
<line x1="168" y1="220.2" x2="184" y2="220.2"/>
<line x1="168" y1="226.4" x2="184" y2="226.4"/>
</g>
<g stroke="#b06f10" stroke-width="0.4" opacity="0.7">
<line x1="189" y1="216" x2="189" y2="240"/>
<line x1="198" y1="216" x2="198" y2="240"/>
<line x1="207" y1="216" x2="207" y2="240"/>
<line x1="216" y1="216" x2="216" y2="240"/>
<line x1="189" y1="216" x2="216" y2="216"/>
<line x1="189" y1="240" x2="216" y2="240"/>
</g>
<g stroke="#c9c240" stroke-width="0.5" opacity="0.8">
<line x1="366" y1="318" x2="366" y2="390"/>
<line x1="372" y1="318" x2="372" y2="390"/>
<line x1="378" y1="318" x2="378" y2="390"/>
<line x1="384" y1="318" x2="384" y2="390"/>
<line x1="390" y1="318" x2="390" y2="390"/>
<line x1="396" y1="318" x2="396" y2="390"/>
<line x1="402" y1="318" x2="402" y2="390"/>
<line x1="366" y1="318" x2="402" y2="318"/>
<line x1="366" y1="327" x2="402" y2="327"/>
<line x1="366" y1="336" x2="402" y2="336"/>
<line x1="366" y1="345" x2="402" y2="345"/>
<line x1="366" y1="354" x2="402" y2="354"/>
<line x1="366" y1="363" x2="402" y2="363"/>
<line x1="366" y1="372" x2="402" y2="372"/>
<line x1="366" y1="381" x2="402" y2="381"/>
<line x1="366" y1="390" x2="402" y2="390"/>
<line x1="366" y1="393" x2="366" y2="440"/>
<line x1="371" y1="393" x2="371" y2="440"/>
<line x1="376" y1="393" x2="376" y2="440"/>
<line x1="381" y1="393" x2="381" y2="440"/>
<line x1="386" y1="393" x2="386" y2="440"/>
<line x1="391" y1="393" x2="391" y2="440"/>
<line x1="396" y1="393" x2="396" y2="440"/>
<line x1="401" y1="393" x2="401" y2="440"/>
<line x1="366" y1="393" x2="402" y2="393"/>
<line x1="366" y1="402" x2="402" y2="402"/>
<line x1="366" y1="411" x2="402" y2="411"/>
<line x1="366" y1="420" x2="402" y2="420"/>
<line x1="366" y1="429" x2="402" y2="429"/>
<line x1="366" y1="438" x2="402" y2="438"/>
<line x1="362" y1="442" x2="362" y2="476"/>
<line x1="372" y1="442" x2="372" y2="476"/>
<line x1="382" y1="442" x2="382" y2="476"/>
<line x1="392" y1="442" x2="392" y2="476"/>
<line x1="362" y1="442" x2="392" y2="442"/>
<line x1="362" y1="453" x2="392" y2="453"/>
<line x1="362" y1="464" x2="392" y2="464"/>
<line x1="362" y1="475" x2="392" y2="475"/>
</g>
<polyline points="364,149 359,160 360,176 364,184 370,190 380,193 388,188 394,186 404,192 400,200 398,206 408,218 418,228 420,248 430,258 444,264 456,260 480,262 500,264 520,267 536,262 552,260" fill="none" stroke="#48bedd" stroke-width="0.9" />
<polyline points="418,230 422,252 432,260" fill="none" stroke="#48bedd" stroke-width="0.9" />
<polyline points="551,316 549,324 551,332" fill="none" stroke="#48bedd" stroke-width="0.9" />
<polyline points="317.4,446.8 336,446 354.3,445.4 366,448 380,456 396,458 404,464 420,472" fill="none" stroke="#48bedd" stroke-width="0.9" />
<polyline points="326,496 340,506 354,516 364,528 374,538 390,540 410,534 426,532 440,528 452,530" fill="none" stroke="#48bedd" stroke-width="0.9" />
<polyline points="324,516 316,526 312,536 316,541" fill="none" stroke="#48bedd" stroke-width="0.9" />
<polyline points="167,425.5 186.3,428.4 207.6,430.5 221.7,434 240.2,437.6 253,441 270,450 280,456 300,452" fill="none" stroke="#48bedd" stroke-width="0.9" />
<polyline points="594.3,464 606,454 619,443.8 631,438" fill="none" stroke="#48bedd" stroke-width="0.9" />
<polyline points="217.8,172.8 223.5,166.4 227.8,167 234.9,174.2 237.7,178.4 247.6,179.9 256.1,184.1 261.8,187.7 271.7,190.5 281.7,189.1 291.6,184.1 300.1,181.3 307.2,177 312.9,173.5" fill="none" stroke="#111" stroke-width="1.1" stroke-linejoin="round" stroke-linecap="round"/>
<polyline points="314.8,199.5 316.6,205 320,204 323.6,213.3 327.7,219 329.4,228.5 333.5,230.2 335.8,227.3 339.9,229.6 339.9,240 345,244.8 349.2,243.6" fill="none" stroke="#111" stroke-width="1.1" stroke-linejoin="round" stroke-linecap="round"/>
<polyline points="334.7,258.8 344,262 350,266 356,276 360,284 367,294 380,302 396,310 408,320 420,328 428,330 438,336 444,342 453,346" fill="none" stroke="#111" stroke-width="1.1" stroke-linejoin="round" stroke-linecap="round"/>
<polyline points="341.6,244.8 335.8,242.5 330,239.6 324,238.4 320,240 321.2,244.8 327.7,248.3 332.3,253 334.7,258.8" fill="none" stroke="#111" stroke-width="1.1" stroke-linejoin="round" stroke-linecap="round"/>
<polyline points="210,197 215,202 221,207 227,212 229.5,217 228,221 222,216 226,220 229,223 227,227 224,226.4 221,228 217,225 212,224 209,221 205,219 202,215 198,215 194,213 191,215 188.5,216.5 188.5,211" fill="none" stroke="#111" stroke-width="1.1" stroke-linejoin="round" stroke-linecap="round"/>
<polyline points="453,346 462,352 478,360 484,366 492,372 500,376 526,379 540,374 562,376 566,381 564,370 570,364 580,362 586,354 592,358 596,364 608,362 610,368 596,374 588,378 590,388 598,402 608,406 612,400 620,410 616,416 624,424 631,426" fill="none" stroke="#111" stroke-width="1.1" stroke-linejoin="round" stroke-linecap="round"/>
<polyline points="631,432.5 621.4,441.5 610,448.3 605.6,454 597.7,460.7 610,458.4 619,455 622.5,466.3 621.4,475.3 631,480" fill="none" stroke="#111" stroke-width="1.1" stroke-linejoin="round" stroke-linecap="round"/>
<polyline points="167,408.5 179.2,412.8 187.7,417 199,419.9 207.6,424.8 218.9,426.2 231.7,427 241.6,430.5 253,437.6 261.5,442.6 275,448.2 288,456 300,450 312,444" fill="none" stroke="#111" stroke-width="1.1" stroke-linejoin="round" stroke-linecap="round"/>
<polyline points="167,434.8 173.5,438.3 186.3,441.1 193.4,445.4 203.3,448.9 217.5,449.6 227.4,448.9 236,453.9 244.4,459.6 253,465.2 264.3,472.3 275,480.9 288,492" fill="none" stroke="#111" stroke-width="1.1" stroke-linejoin="round" stroke-linecap="round"/>
<polyline points="289,460 297.6,475.2 297.6,478.7 289,478.7" fill="none" stroke="#111" stroke-width="1.1" stroke-linejoin="round" stroke-linecap="round"/>
<polyline points="286.2,456 307.5,445.4 314.6,444.7" fill="none" stroke="#111" stroke-width="1.1" stroke-linejoin="round" stroke-linecap="round"/>
<polyline points="303,496 314,494 322,508" fill="none" stroke="#111" stroke-width="1.1" stroke-linejoin="round" stroke-linecap="round"/>
<polyline points="235,290 242.5,285.6 255,284.4 260,288.7 258,293.7 252.5,295.6 245,297.5 240,306.2 235,311.2 228.7,311.2 226.9,306.2 231.2,298.7 235,290" fill="none" stroke="#111" stroke-width="1.1" stroke-linejoin="round" stroke-linecap="round"/>
<polyline points="215,308.7 219,304 223,304.5 225.6,310 225,316.2 227.5,325 235,330 245,333.7 248,338.7 245,339.4 237.5,333.7 227.5,330 222,328.7 217,326 215,321.9 213,316" fill="none" stroke="#111" stroke-width="1.1" stroke-linejoin="round" stroke-linecap="round"/>
<polyline points="167,305.6 183.7,305.6 193.7,308 206.2,310.6 215,308.7" fill="none" stroke="#111" stroke-width="1.1" stroke-linejoin="round" stroke-linecap="round"/>
<polyline points="167,317.5 185,318 193.7,321.2 206.2,324.4 215,321.9" fill="none" stroke="#111" stroke-width="1.1" stroke-linejoin="round" stroke-linecap="round"/>
<polyline points="167,528.7 168.7,535 172.5,541" fill="none" stroke="#111" stroke-width="1.1" stroke-linejoin="round" stroke-linecap="round"/>
<polygon points="220.587,525.192 214.092,531.687 204.908,531.687 198.413,525.192 198.413,516.008 204.908,509.513 214.092,509.513 220.587,516.008" fill="none" stroke="#111" stroke-width="0.8"/>
<path d="M208,515 A5.6,5.6 0 0 0 208,526.2" fill="none" stroke="#111" stroke-width="0.8"/>
<polyline points="167,195 217,195 217,165" fill="none" stroke="#000" stroke-width="2.4" stroke-dasharray="6 1.8 1.6 1.8"/>
<polyline points="426,541 426,415 493,415 500.8,419.2 572.5,493.3 572.5,541" fill="none" stroke="#000" stroke-width="2.5" stroke-dasharray="6 1.8 1.6 1.8"/>
<polyline points="217,165 226,163 294,176 310,167 314,171 310,180 310,193 326,193 326,200.5 358,200.5 365,207.5 366,222 365,228 365,272 438,311 436,324 454,332 453,346 631,346" fill="none" stroke="#1f7ad6" stroke-width="2.2" />
<polyline points="217,165 226,163 294,176 310,167 314,171 310,180 310,193 326,193 326,200.5 358,200.5 365,207.5 366,222 365,228 365,272 438,311 436,324 454,332 453,346 631,346" fill="none" stroke="#000" stroke-width="2.2" stroke-dasharray="2.2 1.6"/>
<polyline points="365,272 438,311" fill="none" stroke="#000" stroke-width="2.4" stroke-dasharray="5 1.5 1.2 1.5"/>
<polyline points="453,347.4 631,347.4" fill="none" stroke="#1f7ad6" stroke-width="2" />
<polyline points="453,346 631,346" fill="none" stroke="#000" stroke-width="2.2" stroke-dasharray="6 1.8 1.6 1.8"/>
<polyline points="503,421.4 571,491.8" fill="none" stroke="#f0e800" stroke-width="0.9" stroke-dasharray="1.6 5.4" stroke-dashoffset="-3"/>
<polyline points="218,149 218,164" fill="none" stroke="#1f7ad6" stroke-width="2.3" stroke-linejoin="miter"/>
<polyline points="310,180 310,199.5 326,199.5" fill="none" stroke="#1f7ad6" stroke-width="2.3" stroke-linejoin="miter"/>
<polyline points="365,272 365,292 368,294 370,295 416,332 430,344 436,324" fill="none" stroke="#1f7ad6" stroke-width="2.3" stroke-linejoin="miter"/>
<polyline points="459,375 457.5,379 474,397.5 471,412" fill="none" stroke="#1f7ad6" stroke-width="2.3" stroke-linejoin="miter"/>
<polyline points="459,375 473.3,385 475,381" fill="none" stroke="#1f7ad6" stroke-width="2.3" stroke-linejoin="miter"/>
<polyline points="475,381 500,392 506.7,394.5 506.7,415.8 565.8,472.5 568.8,468" fill="none" stroke="#1f7ad6" stroke-width="2.3" stroke-linejoin="miter"/>
<polyline points="568.8,468 573.3,481.7 605.6,515.8 631,512.3" fill="none" stroke="#1f7ad6" stroke-width="2.3" stroke-linejoin="miter"/>
<polyline points="491,346 491,370 501,370 501,377" fill="none" stroke="#1f7ad6" stroke-width="2.3" stroke-linejoin="miter"/>
<polyline points="487,385 490,377 492,385 487,385" fill="none" stroke="#1f7ad6" stroke-width="2.3" stroke-linejoin="miter"/>
<polyline points="526,347 526,379 528,386 524,394 530,398 538,388 531,384 528,386" fill="none" stroke="#1f7ad6" stroke-width="2.3" stroke-linejoin="miter"/>
<polyline points="504,391 523,396" fill="none" stroke="#1f7ad6" stroke-width="2.3" stroke-linejoin="miter"/>
<polyline points="540,347 547,387 576,384 577,347" fill="none" stroke="#1f7ad6" stroke-width="2.3" stroke-linejoin="miter"/>
<polyline points="559.2,435.4 579.4,435.4 579.4,444.2 588.5,444.2 588.5,454.4 581.8,454.4 581.8,462.8 568.3,463 559.2,435.4" fill="none" stroke="#1f7ad6" stroke-width="2.3" stroke-linejoin="miter"/>
<polyline points="167,421.3 172.8,407.8 179.9,407.8 179.9,424.8 191.2,424.8 191.2,440.4 205.4,440.4 205.4,407.8 219.6,407.8 219.6,475.6 167,475.2" fill="none" stroke="#1f7ad6" stroke-width="2.3" stroke-linejoin="miter"/>
<polyline points="241.6,431.2 253,431.2 253,442.6 241.6,442.6 241.6,431.2" fill="none" stroke="#1f7ad6" stroke-width="2.3" stroke-linejoin="miter"/>
<polyline points="324.5,541 324.5,480.1 302.8,480.1 302.8,514 254.6,514" fill="none" stroke="#1f7ad6" stroke-width="2.3" stroke-linejoin="miter"/>
<polyline points="289,514 289,458.2 328,440.4 358.5,441.1 358.5,476.6 393,476.6 393,413 426,413" fill="none" stroke="#1f7ad6" stroke-width="2.3" stroke-linejoin="miter"/>
<polyline points="254.6,541 254.6,530.6 287,530.6 287,541" fill="none" stroke="#1f7ad6" stroke-width="2.3" stroke-linejoin="miter"/>
<polyline points="216.9,541 216.9,530.6 251.2,530.6 251.2,541" fill="none" stroke="#1f7ad6" stroke-width="2.3" stroke-linejoin="miter"/>
<g font-family="Liberation Sans, sans-serif" font-weight="bold" fill="#2a2a2a" text-anchor="middle">
<text x="270" y="197.6" font-size="3.4">SCENIC ST</text>
<text x="268" y="209.5" font-size="3.4">MCELROY ST</text>
<text x="254" y="216.4" font-size="3.4">IDLEMAN ST</text>
<text x="281" y="231" font-size="3.4">HOOD ST</text>
<text x="244.6" y="187" font-size="3.2" transform="rotate(-90 244.6 187)">HOFFMAN AVE</text>
<text x="314" y="214" font-size="3" transform="rotate(-90 314 214)">HOOD CT</text>
<text x="302.6" y="190" font-size="3" transform="rotate(-90 302.6 190)">VIR DR</text>
<text x="187.2" y="247" font-size="3.2" transform="rotate(-90 187.2 247)">STRAUSS AVE</text>
<text x="199.5" y="233" font-size="3.2" transform="rotate(-90 199.5 233)">ALT AVE</text>
<text x="216" y="247" font-size="3.2" transform="rotate(-90 216 247)">SMITH AVE</text>
<text x="231.9" y="240" font-size="3.2" transform="rotate(-90 231.9 240)">MEINIG AVE</text>
<text x="246.4" y="258" font-size="3.2" transform="rotate(-90 246.4 258)">HOFFMAN AVE</text>
<text x="260.7" y="250" font-size="3.2" transform="rotate(-90 260.7 250)">REVENUE AVE</text>
<text x="170.7" y="262" font-size="3.2" transform="rotate(-90 170.7 262)">BRUNS AVE</text>
<text x="298.4" y="252" font-size="3.2" transform="rotate(-52 298.4 252)">TEN EYCK RD</text>
<text x="322" y="262" font-size="3.2" transform="rotate(14 322 262)">PLEASANT ST</text>
<text x="309" y="285.5" font-size="3.2" transform="rotate(16 309 285.5)">PROCTOR BLVD</text>
<text x="180" y="284.2" font-size="3.2">JUNKER ST</text>
<text x="202.9" y="270" font-size="3.2" transform="rotate(-90 202.9 270)">SHELLEY AVE</text>
<text x="268" y="300" font-size="3" transform="rotate(-90 268 300)">LOUNDREE</text>
<text x="272.6" y="298" font-size="3" transform="rotate(-90 272.6 298)">DR</text>
<text x="285.5" y="300" font-size="3" transform="rotate(-90 285.5 300)">WOLF DR</text>
<text x="270" y="324.3" font-size="3.3">KIMBERLY DR</text>
<text x="271" y="340" font-size="3.3">STEFENEE CT</text>
<text x="297" y="345.6" font-size="3.3">GARY ST</text>
<text x="277" y="356" font-size="3.2" transform="rotate(42 277 356)">BARKER CT</text>
<text x="320" y="324" font-size="3.2" transform="rotate(-82 320 324)">VAN FLEET AVE</text>
<text x="307" y="312" font-size="3.2" transform="rotate(-90 307 312)">SOLSO DR</text>
<text x="347.4" y="356" font-size="3.2" transform="rotate(-80 347.4 356)">DAVIS ST</text>
<text x="331.5" y="350" font-size="3" transform="rotate(-65 331.5 350)">WEAVER</text>
<text x="336" y="353.5" font-size="3" transform="rotate(-65 336 353.5)">CT</text>
<text x="323.5" y="366" font-size="3" transform="rotate(-62 323.5 366)">HEISING</text>
<text x="328.5" y="369" font-size="3" transform="rotate(-62 328.5 369)">CT</text>
<text x="340" y="332" font-size="3">HALL</text>
<text x="342" y="336" font-size="3">CT</text>
<text x="191" y="345" font-size="3" transform="rotate(-84 191 345)">BOSLEY</text>
<text x="195" y="345" font-size="3" transform="rotate(-84 195 345)">CT</text>
<text x="228.6" y="348" font-size="3.2" transform="rotate(-90 228.6 348)">JAMPER CT</text>
<text x="222.2" y="360" font-size="3.2" transform="rotate(-90 222.2 360)">MEINIG AVE</text>
<text x="200" y="371" font-size="3.2" transform="rotate(-66 200 371)">SANDLAGER ST</text>
<text x="175" y="365" font-size="3">NG CIR</text>
<text x="240" y="377.6" font-size="3.3">EVANS ST</text>
<text x="208.3" y="393.4" font-size="3.3">CLAYTON</text>
<text x="208.3" y="399.4" font-size="3.3">CT</text>
<text x="236.6" y="394" font-size="3.3">GLOVER</text>
<text x="236.6" y="400" font-size="3.3">CT</text>
<text x="253" y="393" font-size="3.2" transform="rotate(-90 253 393)">ROSS AVE</text>
<text x="214" y="405.2" font-size="3.3">DUBARKO RD</text>
<text x="299" y="379.4" font-size="3.3">CASSIDY CT</text>
<text x="317.5" y="389" font-size="3.3">MITCHELL CT</text>
<text x="304" y="400.4" font-size="3.3">SYBLON LN</text>
<text x="298" y="360" font-size="3" transform="rotate(-90 298 360)">REED</text>
<text x="304" y="358" font-size="3" transform="rotate(-90 304 358)">CIR</text>
<text x="349.5" y="385.6" font-size="3">BECKE</text>
<text x="349.5" y="391" font-size="3">CT</text>
<text x="383" y="391.4" font-size="3.3">THERESE ST</text>
<text x="301" y="417.6" font-size="3.3">WALL ST</text>
<text x="380" y="432" font-size="3.3">LAUREL ST</text>
<text x="381" y="414" font-size="3" transform="rotate(-90 381 414)">WHITE TAIL</text>
<text x="386" y="412" font-size="3" transform="rotate(-90 386 412)">AVE</text>
<text x="414" y="368.4" font-size="3.2">BUCK ST</text>
<text x="414" y="382.6" font-size="3.2">TANAGER</text>
<text x="405.2" y="382" font-size="3.2" transform="rotate(-90 405.2 382)">AHLBERG AVE</text>
<text x="418.2" y="398" font-size="3.2" transform="rotate(-90 418.2 398)">MEADOW AVE</text>
<text x="384" y="332" font-size="3" transform="rotate(48 384 332)">MCCORMICK</text>
<text x="378" y="336" font-size="3" transform="rotate(48 378 336)">CT</text>
<text x="272" y="423" font-size="3" transform="rotate(-62 272 423)">PACIFIC</text>
<text x="278" y="425" font-size="3" transform="rotate(-62 278 425)">AVE</text>
<text x="287.4" y="441" font-size="3" transform="rotate(-90 287.4 441)">CLOUDCAP</text>
<text x="293.8" y="438" font-size="3" transform="rotate(-90 293.8 438)">AVE</text>
<text x="265" y="440.5" font-size="3" transform="rotate(24 265 440.5)">DALLAM</text>
<text x="188" y="481.2" font-size="3.2">SCHOM VILLAGE DR</text>
<text x="195" y="496.4" font-size="3.2">LANCASTER ST</text>
<text x="248" y="487.6" font-size="3.3">WOODBURY ST</text>
<text x="248" y="499.4" font-size="3.3">STRAFFORD ST</text>
<text x="203" y="508.6" font-size="3.2">NEWTON</text>
<text x="226" y="526" font-size="3.2">AMHERST</text>
<text x="178" y="528.6" font-size="3.2">SHING ST</text>
<text x="172.6" y="506" font-size="3" transform="rotate(-90 172.6 506)">BARRINGTON</text>
<text x="177" y="503" font-size="3" transform="rotate(-90 177 503)">AVE</text>
<text x="185.6" y="512" font-size="3" transform="rotate(-90 185.6 512)">WEBSTER</text>
<text x="191" y="510" font-size="3" transform="rotate(-90 191 510)">AVE</text>
<text x="223.6" y="497" font-size="3" transform="rotate(-90 223.6 497)">CORNWALL AVE</text>
<text x="248.6" y="520" font-size="3" transform="rotate(-90 248.6 520)">JEWELBERRY</text>
<text x="253.6" y="524" font-size="3" transform="rotate(-90 253.6 524)">AVE</text>
<text x="197.2" y="528" font-size="3" transform="rotate(-90 197.2 528)">ARLINGTON</text>
<text x="357" y="466" font-size="3.2" transform="rotate(-90 357 466)">LANGENSAND RD</text>
<text x="552" y="385.5" font-size="3.2" transform="rotate(-8 552 385.5)">VISTA VIEW CT</text>
<text x="557" y="417.3" font-size="3.2">ORTIZ ST</text>
<text x="530" y="424.7" font-size="3.2">WARM SPRINGS ST</text>
<text x="547" y="441" font-size="3" transform="rotate(45 547 441)">METOLIUS AVE</text>
<text x="565.5" y="450" font-size="3" transform="rotate(72 565.5 450)">DESCHUTES</text>
<text x="596" y="466.5" font-size="3" transform="rotate(-15 596 466.5)">CASCADIA VILLAGE DR</text>
<text x="616" y="482" font-size="3" transform="rotate(46 616 482)">BEDORTHA AVE</text>
<text x="598" y="495" font-size="3" transform="rotate(-48 598 495)">BEAVER</text>
<text x="378" y="316" font-size="3.2" transform="rotate(42 378 316)">HWY 26</text>
<text x="464" y="384" font-size="3" transform="rotate(45 464 384)">HWY</text>
</g>
<polygon points="210.4,309.721 205.421,314.7 198.379,314.7 193.4,309.721 193.4,302.679 198.379,297.7 205.421,297.7 210.4,302.679" fill="none" stroke="#222" stroke-width="0.8"/>
<text x="202.2" y="310.8" font-family="Liberation Serif, serif" font-size="13" text-anchor="middle" fill="#3a2a10">P</text>
<rect x="553.5" y="120" width="120" height="198" fill="#fff" stroke="#000" stroke-width="1.2"/>
<rect x="560" y="136.5" width="32" height="15" fill="#fff22e" stroke="#555" stroke-width="0.6"/>
<g font-family="Liberation Sans, sans-serif" font-size="9.6" fill="#111">
<rect x="560" y="156.5" width="32" height="15" fill="#fca82e" stroke="#555" stroke-width="0.6"/>
<text x="597.5" y="167.5">R-2</text>
<text x="623" y="167.5">(M</text>
<rect x="560" y="176.5" width="32" height="15" fill="#a86c18" stroke="#555" stroke-width="0.6"/>
<text x="597.5" y="187.5">R-3</text>
<text x="623" y="187.5">(H</text>
<rect x="560" y="196.5" width="32" height="15" fill="#ffbec8" stroke="#555" stroke-width="0.6"/>
<text x="597.5" y="207.5">C-1</text>
<text x="623" y="207.5">(C</text>
<rect x="560" y="216.5" width="32" height="15" fill="#f5000f" stroke="#555" stroke-width="0.6"/>
<text x="597.5" y="227.5">C-2</text>
<text x="623" y="227.5">(G</text>
<rect x="560" y="236.5" width="32" height="15" fill="#ffdbdb" stroke="#555" stroke-width="0.6"/>
<text x="597.5" y="247.5">C-3</text>
<text x="622.5" y="247.5">(V</text>
<rect x="560" y="256.5" width="32" height="15" fill="#9dd6c3" stroke="#555" stroke-width="0.6"/>
<text x="597.5" y="267.5">I-1</text>
<text x="618" y="267.5">(Ind</text>
<rect x="560" y="276.5" width="32" height="15" fill="#c433ff" stroke="#555" stroke-width="0.6"/>
<text x="597.5" y="287.5">I-2</text>
<text x="618" y="287.5">(Lig</text>
<rect x="560" y="296.5" width="32" height="15" fill="#b99ad6" stroke="#555" stroke-width="0.6"/>
<text x="597.5" y="307.5">I-3</text>
<text x="618" y="307.5">(Ge</text>
</g>
<path d="M437.5,429 L434,430.5 M437.5,428.5 C438,405 441,380 445,356 C462,355 486,356.5 504,358.5 C504.5,372 503,384 502,394 C500,406 497,418 495,428.5 C478,427.5 455,427.5 437.5,428.5" fill="none" stroke="#c8202b" stroke-width="6.6" stroke-linecap="round" stroke-linejoin="round"/>
<path d="M467.8,449.5 C469.4,460 470.6,480 470.4,494 C470,504 468.6,514 467.6,524.5 L461.6,525.4" fill="none" stroke="#c8202b" stroke-width="6.8" stroke-linecap="round" stroke-linejoin="round"/>
<path d="M451.4,474 C457,466 463,457 467.8,450.5 M471,452.5 C478,459 486,467 493.2,473" fill="none" stroke="#c8202b" stroke-width="6.8" stroke-linecap="round" stroke-linejoin="round"/>
</g></svg>
<svg class="abs" style="left:640px;top:149px" width="160" height="401" viewBox="640 149 160 401">
<rect x="640" y="189" width="160" height="1" fill="#3c3d41"/>
<circle cx="684.5" cy="169" r="13.6" fill="#345378"/>
<g transform="translate(684.5 169) rotate(45)" fill="#d2e3fc"><rect x="-1.7" y="-6.2" width="3.4" height="3.4" rx="1"/><rect x="-1.7" y="-2" width="3.4" height="5.6" rx="0.6"/><path d="M-1.4,4 L1.4,4 L0,6.4 Z"/></g>
<g transform="translate(720.4 168.6) rotate(45)" fill="none" stroke="#e3e3e3" stroke-width="1"><rect x="-1.9" y="-5" width="3.8" height="6.6" rx="0.9"/><path d="M-1.9,1.6 L0,4.8 L1.9,1.6"/></g>
<g fill="none" stroke="#e3e3e3" stroke-width="1.1" stroke-linejoin="round"><path d="M751.5,171 L756,165.2 L760.2,168.6 L757.2,172.6 L753.4,172.6 Z"/><path d="M757.5,172.8 L760.5,172.8"/></g>
<text x="656.6" y="212.6" font-family="Liberation Sans, sans-serif" font-size="7.7" fill="#e8eaed">Size</text>
<g stroke="#c4c7cc" stroke-linecap="round">
<line x1="663" y1="241.4" x2="670" y2="234.6" stroke-width="0.9"/>
<line x1="690" y1="241.2" x2="696.6" y2="234.8" stroke-width="1.15"/>
<line x1="716.6" y1="241" x2="722.8" y2="235" stroke-width="1.55"/>
<line x1="744" y1="240.6" x2="749.4" y2="235.4" stroke-width="2.3"/>
</g>
<circle cx="773.2" cy="238" r="10.4" fill="#345378"/>
<line x1="770.6" y1="240.6" x2="776" y2="235.4" stroke="#a8c7fa" stroke-width="2.8" stroke-linecap="round"/>
<text x="656.6" y="277.4" font-family="Liberation Sans, sans-serif" font-size="7.7" fill="#e8eaed">Color</text>
<g stroke-width="0.7">
<circle cx="666.6" cy="302.2" r="6.5" fill="#000" stroke="#8a8d91"/>
<circle cx="693.4" cy="302.2" r="6.5" fill="#5f6368" stroke="#777b80"/>
<circle cx="720" cy="302.2" r="6.5" fill="#9aa0a6" stroke="#aab0b5"/>
<circle cx="746.6" cy="302.2" r="6.5" fill="#dadce0" stroke="#e6e8ea"/>
<circle cx="773.4" cy="302.2" r="6.5" fill="#ffffff" stroke="#ffffff"/>
<circle cx="666.6" cy="329" r="6.5" fill="#f28b82" stroke="#f6a8a1"/>
<circle cx="693.4" cy="329" r="6.5" fill="#fdd663" stroke="#fde08a"/>
<circle cx="720" cy="329" r="6.5" fill="#81c995" stroke="#9dd5ad"/>
<circle cx="746.6" cy="329" r="6.5" fill="#8ab4f8" stroke="#a6c6fa"/>
<circle cx="773.4" cy="329" r="6.5" fill="#eec9ae" stroke="#f2d6c1"/>
<circle cx="666.6" cy="355.6" r="6.5" fill="#e94235" stroke="#ee6a60"/>
<circle cx="693.4" cy="355.6" r="6.5" fill="#fbbc04" stroke="#fcca3f"/>
<circle cx="720" cy="355.6" r="6.5" fill="#34a853" stroke="#5fbb78"/>
<circle cx="746.6" cy="355.6" r="6.5" fill="#4285f4" stroke="#6fa2f6"/>
<circle cx="773.4" cy="355.6" r="6.5" fill="#e2a185" stroke="#e9b7a1"/>
<circle cx="666.6" cy="382.2" r="10" fill="#c5221f" stroke="#e08a88" stroke-width="0.9"/>
<circle cx="693.4" cy="382.2" r="6.5" fill="#f29900" stroke="#f5b040"/>
<circle cx="720" cy="382.2" r="6.5" fill="#188038" stroke="#4f9f67"/>
<circle cx="746.6" cy="382.2" r="6.5" fill="#1967d2" stroke="#5590de"/>
<circle cx="773.4" cy="382.2" r="6.5" fill="#885945" stroke="#a58172"/>
</g>
</svg>

<div class="abs" style="left:600px;top:59px;width:191px;height:49px;border-radius:9px;background:#e3e8ec;box-shadow:0 2px 7px rgba(0,0,0,0.22),0 0 0 0.5px rgba(0,0,0,0.08);"></div>
<div class="abs" style="left:608px;top:74.5px;width:17px;height:17px;border-radius:4px;background:#fff;box-shadow:0 0 1px rgba(0,0,0,0.25);"></div>
<svg class="abs" style="left:608px;top:74.5px" width="17" height="17" viewBox="0 0 17 17"><g fill="#e8334a"><path d="M3.2,3.2 L7.4,3.2 L13.8,9.8 L13.8,13.8 L9.6,13.8 L3.2,7.2 Z"/><path d="M3.2,9.4 L7.6,13.8 L3.2,13.8 Z"/><path d="M9.4,3.2 L13.8,3.2 L13.8,7.6 Z"/></g></svg>
<div class="t" id="nt" style="left:632px;top:65.8px;font-size:7.7px;letter-spacing:-0.15px;line-height:10px;font-weight:bold;color:#1d1d1f;">Yahoo Sports</div>
<div class="t" id="nb" style="left:632px;top:75.6px;font-size:7.7px;letter-spacing:-0.1px;line-height:8.7px;color:#222;white-space:nowrap;">Report: Knicks have White House delete<br>mock logo post aimed at NYC Mayor-elect<br>Zohran Mamdani.</div>

<svg class="abs" style="left:784px;top:55px" width="10" height="8" viewBox="0 0 10 8"><path d="M3.2,2.2 L8,3.6 L5.6,6.8 Z" fill="#222"/></svg>
</body>
</html>
